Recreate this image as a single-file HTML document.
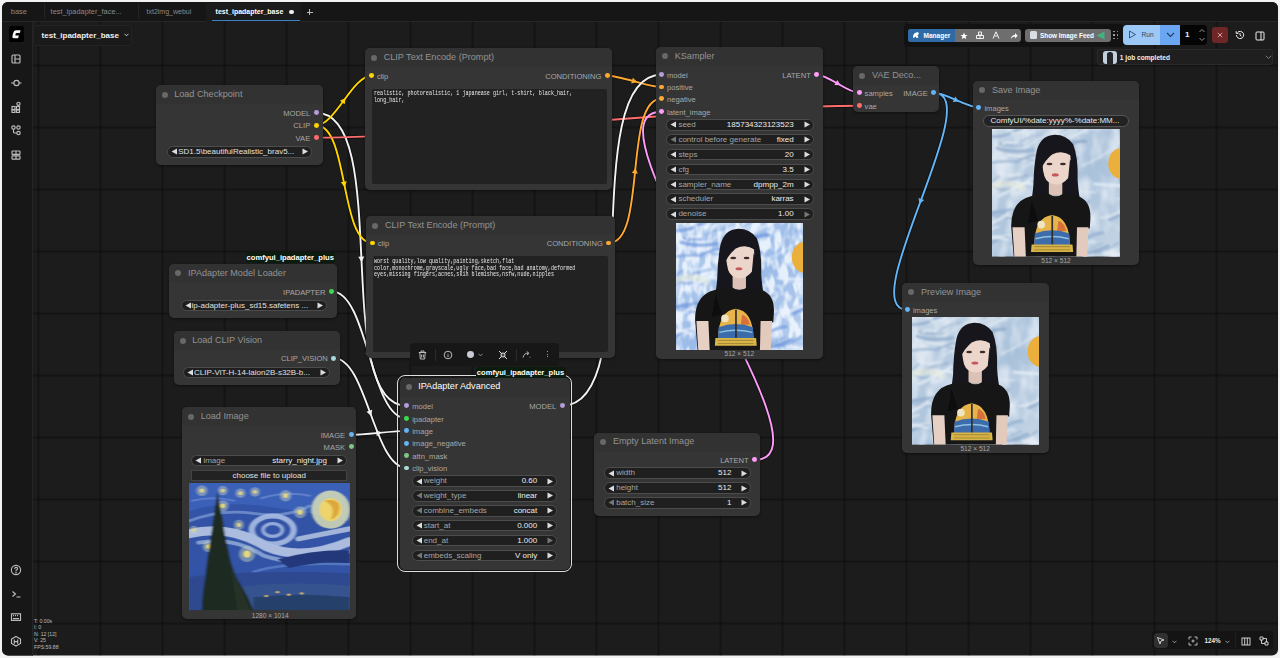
<!DOCTYPE html><html><head><meta charset="utf-8"><style>html,body{margin:0;padding:0;width:1280px;height:658px;overflow:hidden;background:#f3f3f3;font-family:"Liberation Sans",sans-serif;}*{box-sizing:content-box}</style></head><body>
<div id="win" style="position:absolute;left:0;top:0;width:1280px;height:658px;clip-path:inset(2px 2px 2.5px 2px round 6px);background:#1c1c1c;overflow:hidden">
<div style="position:absolute;left:30px;top:22px;width:1250px;height:636px;background-image:linear-gradient(to right, rgba(0,0,0,0.3) 2px, transparent 2px),linear-gradient(to bottom, rgba(0,0,0,0.3) 2px, transparent 2px);background-size:62px 62px;background-position:7.5px 42.5px;"></div>
<svg style="position:absolute;left:0;top:0" width="1280" height="658"><path d="M316.2,112.7 C392.9,112.7 330.0,405.8 406.7,405.8" stroke="rgba(0,0,0,0.5)" stroke-width="3.5" fill="none"/><path d="M316.2,125.3 C334.8,125.3 352.8,75.7 371.4,75.7" stroke="rgba(0,0,0,0.5)" stroke-width="3.5" fill="none"/><path d="M316.2,125.3 C348.8,125.3 339.7,243.0 372.3,243.0" stroke="rgba(0,0,0,0.5)" stroke-width="3.5" fill="none"/><path d="M316.2,137.6 C452.2,137.6 723.1,105.8 859.1,105.8" stroke="rgba(0,0,0,0.5)" stroke-width="3.5" fill="none"/><path d="M607.3,75.7 C621.1,75.7 647.7,87.0 661.5,87.0" stroke="rgba(0,0,0,0.5)" stroke-width="3.5" fill="none"/><path d="M608.8,243.0 C647.2,243.0 623.1,98.8 661.5,98.8" stroke="rgba(0,0,0,0.5)" stroke-width="3.5" fill="none"/><path d="M562.2,405.8 C648.6,405.8 575.1,74.7 661.5,74.7" stroke="rgba(0,0,0,0.5)" stroke-width="3.5" fill="none"/><path d="M754.7,459.8 C844.8,459.8 571.4,111.7 661.5,111.7" stroke="rgba(0,0,0,0.5)" stroke-width="3.5" fill="none"/><path d="M816.8,74.7 C828.3,74.7 847.6,92.8 859.1,92.8" stroke="rgba(0,0,0,0.5)" stroke-width="3.5" fill="none"/><path d="M933.7,92.8 C945.6,92.8 967.0,107.5 978.9,107.5" stroke="rgba(0,0,0,0.5)" stroke-width="3.5" fill="none"/><path d="M933.7,92.8 C988.3,92.8 852.8,309.8 907.4,309.8" stroke="rgba(0,0,0,0.5)" stroke-width="3.5" fill="none"/><path d="M331.5,291.4 C368.4,291.4 369.8,418.5 406.7,418.5" stroke="rgba(0,0,0,0.5)" stroke-width="3.5" fill="none"/><path d="M333.8,358.1 C366.8,358.1 373.7,468.0 406.7,468.0" stroke="rgba(0,0,0,0.5)" stroke-width="3.5" fill="none"/><path d="M351.1,434.9 C365.0,434.9 392.8,430.9 406.7,430.9" stroke="rgba(0,0,0,0.5)" stroke-width="3.5" fill="none"/><path d="M316.2,112.7 C392.9,112.7 330.0,405.8 406.7,405.8" stroke="#f2f2f2" stroke-width="1.9" fill="none"/><path d="M3,0 L-2.5,-3 L-2.5,3Z" fill="#f2f2f2" transform="translate(361.4,259.2) rotate(87.3)"/><path d="M316.2,125.3 C334.8,125.3 352.8,75.7 371.4,75.7" stroke="#FFD500" stroke-width="1.9" fill="none"/><path d="M3,0 L-2.5,-3 L-2.5,3Z" fill="#FFD500" transform="translate(343.8,100.5) rotate(-53.5)"/><path d="M316.2,125.3 C348.8,125.3 339.7,243.0 372.3,243.0" stroke="#FFD500" stroke-width="1.9" fill="none"/><path d="M3,0 L-2.5,-3 L-2.5,3Z" fill="#FFD500" transform="translate(344.2,184.2) rotate(78.7)"/><path d="M316.2,137.6 C452.2,137.6 723.1,105.8 859.1,105.8" stroke="#FF6E6E" stroke-width="1.9" fill="none"/><path d="M3,0 L-2.5,-3 L-2.5,3Z" fill="#FF6E6E" transform="translate(587.7,121.7) rotate(-4.5)"/><path d="M607.3,75.7 C621.1,75.7 647.7,87.0 661.5,87.0" stroke="#FFA931" stroke-width="1.9" fill="none"/><path d="M3,0 L-2.5,-3 L-2.5,3Z" fill="#FFA931" transform="translate(634.4,81.3) rotate(15.6)"/><path d="M608.8,243.0 C647.2,243.0 623.1,98.8 661.5,98.8" stroke="#FFA931" stroke-width="1.9" fill="none"/><path d="M3,0 L-2.5,-3 L-2.5,3Z" fill="#FFA931" transform="translate(635.1,170.9) rotate(-84.3)"/><path d="M562.2,405.8 C648.6,405.8 575.1,74.7 661.5,74.7" stroke="#f2f2f2" stroke-width="1.9" fill="none"/><path d="M3,0 L-2.5,-3 L-2.5,3Z" fill="#f2f2f2" transform="translate(611.9,240.3) rotate(-87.8)"/><path d="M754.7,459.8 C844.8,459.8 571.4,111.7 661.5,111.7" stroke="#FF9CF9" stroke-width="1.9" fill="none"/><path d="M3,0 L-2.5,-3 L-2.5,3Z" fill="#FF9CF9" transform="translate(708.1,285.8) rotate(-117.8)"/><path d="M816.8,74.7 C828.3,74.7 847.6,92.8 859.1,92.8" stroke="#FF9CF9" stroke-width="1.9" fill="none"/><path d="M3,0 L-2.5,-3 L-2.5,3Z" fill="#FF9CF9" transform="translate(838.0,83.8) rotate(30.4)"/><path d="M933.7,92.8 C945.6,92.8 967.0,107.5 978.9,107.5" stroke="#64B5F6" stroke-width="1.9" fill="none"/><path d="M3,0 L-2.5,-3 L-2.5,3Z" fill="#64B5F6" transform="translate(956.3,100.2) rotate(23.8)"/><path d="M933.7,92.8 C988.3,92.8 852.8,309.8 907.4,309.8" stroke="#64B5F6" stroke-width="1.9" fill="none"/><path d="M3,0 L-2.5,-3 L-2.5,3Z" fill="#64B5F6" transform="translate(920.5,201.3) rotate(110.5)"/><path d="M331.5,291.4 C368.4,291.4 369.8,418.5 406.7,418.5" stroke="#f2f2f2" stroke-width="1.9" fill="none"/><path d="M3,0 L-2.5,-3 L-2.5,3Z" fill="#f2f2f2" transform="translate(369.1,354.9) rotate(73.2)"/><path d="M333.8,358.1 C366.8,358.1 373.7,468.0 406.7,468.0" stroke="#f2f2f2" stroke-width="1.9" fill="none"/><path d="M3,0 L-2.5,-3 L-2.5,3Z" fill="#f2f2f2" transform="translate(370.2,413.1) rotate(70.0)"/><path d="M351.1,434.9 C365.0,434.9 392.8,430.9 406.7,430.9" stroke="#f2f2f2" stroke-width="1.9" fill="none"/><path d="M3,0 L-2.5,-3 L-2.5,3Z" fill="#f2f2f2" transform="translate(378.9,432.9) rotate(-5.5)"/></svg>
<div style="position:absolute;left:155.5px;top:85px;width:167px;height:79.5px;background:#353535;border-radius:5px;box-shadow:0 1px 3px rgba(0,0,0,0.45);"></div>
<div style="position:absolute;left:155.5px;top:85px;width:167px;height:19px;background:#323232;border-radius:5px 5px 0 0;"></div>
<div style="position:absolute;left:161.50px;top:91.50px;width:6.00px;height:6.00px;border-radius:50%;background:#686868;"></div>
<div style="position:absolute;left:174.2px;top:88.84px;line-height:10.92px;font-size:9.1px;color:#929292;font-weight:400;font-family:'Liberation Sans', sans-serif;white-space:pre;">Load Checkpoint</div>
<div style="position:absolute;left:313.75px;top:110.25px;width:4.90px;height:4.90px;border-radius:50%;background:#B39DDB;"></div>
<div style="position:absolute;right:969.8px;top:108.84px;line-height:9.12px;font-size:7.6px;color:#a8a8a8;font-weight:400;font-family:'Liberation Sans', sans-serif;white-space:pre;text-align:right;">MODEL</div>
<div style="position:absolute;left:313.75px;top:122.85px;width:4.90px;height:4.90px;border-radius:50%;background:#FFD500;"></div>
<div style="position:absolute;right:969.8px;top:121.44px;line-height:9.12px;font-size:7.6px;color:#a8a8a8;font-weight:400;font-family:'Liberation Sans', sans-serif;white-space:pre;text-align:right;">CLIP</div>
<div style="position:absolute;left:313.75px;top:135.15px;width:4.90px;height:4.90px;border-radius:50%;background:#FF6E6E;"></div>
<div style="position:absolute;right:969.8px;top:133.74px;line-height:9.12px;font-size:7.6px;color:#a8a8a8;font-weight:400;font-family:'Liberation Sans', sans-serif;white-space:pre;text-align:right;">VAE</div>
<div style="position:absolute;left:167.2px;top:146.00px;width:145.20px;height:11.60px;box-sizing:border-box;background:#1f1f1f;border:1px solid #4c4c4c;border-radius:5.8px;"></div>
<svg style="position:absolute;left:171.20px;top:148.30px;" width="7" height="7"><path d="M6 0.5 L0.5 3.5 L6 6.5Z" fill="#ddd"/></svg>
<svg style="position:absolute;left:302.40px;top:148.30px;" width="7" height="7"><path d="M0.5 0.5 L6 3.5 L0.5 6.5Z" fill="#ddd"/></svg>
<div style="position:absolute;left:178.2px;top:147.00px;line-height:9.60px;font-size:8.0px;color:#e0e0e0;font-weight:400;font-family:'Liberation Sans', sans-serif;white-space:pre;">SD1.5\beautifulRealistic_brav5...</div>
<div style="position:absolute;left:365px;top:48.3px;width:247px;height:142px;background:#353535;border-radius:5px;box-shadow:0 1px 3px rgba(0,0,0,0.45);"></div>
<div style="position:absolute;left:365px;top:48.3px;width:247px;height:19px;background:#323232;border-radius:5px 5px 0 0;"></div>
<div style="position:absolute;left:371.00px;top:54.80px;width:6.00px;height:6.00px;border-radius:50%;background:#686868;"></div>
<div style="position:absolute;left:383.7px;top:52.14px;line-height:10.92px;font-size:9.1px;color:#929292;font-weight:400;font-family:'Liberation Sans', sans-serif;white-space:pre;">CLIP Text Encode (Prompt)</div>
<div style="position:absolute;left:368.95px;top:73.25px;width:4.90px;height:4.90px;border-radius:50%;background:#FFD500;"></div>
<div style="position:absolute;left:376.9px;top:71.84px;line-height:9.12px;font-size:7.6px;color:#a8a8a8;font-weight:400;font-family:'Liberation Sans', sans-serif;white-space:pre;">clip</div>
<div style="position:absolute;left:604.85px;top:73.25px;width:4.90px;height:4.90px;border-radius:50%;background:#FFA931;"></div>
<div style="position:absolute;right:678.7px;top:71.84px;line-height:9.12px;font-size:7.6px;color:#a8a8a8;font-weight:400;font-family:'Liberation Sans', sans-serif;white-space:pre;text-align:right;">CONDITIONING</div>
<div style="position:absolute;left:372.2px;top:88.6px;width:234.6px;height:95px;background:#222;border-radius:2px;"></div>
<div style="position:absolute;left:374px;top:90.3px;width:320px;font-family:'Liberation Mono', monospace;font-size:7px;line-height:6.45px;color:#eaeaea;white-space:pre;transform:scaleX(0.726);transform-origin:0 0;">realistic, photorealistic, 1 japanease girl, t-shirt, black_hair,
long_hair,</div>
<div style="position:absolute;left:366.3px;top:216px;width:248.8px;height:142.3px;background:#353535;border-radius:5px;box-shadow:0 1px 3px rgba(0,0,0,0.45);"></div>
<div style="position:absolute;left:366.3px;top:216px;width:248.8px;height:19px;background:#323232;border-radius:5px 5px 0 0;"></div>
<div style="position:absolute;left:372.30px;top:222.50px;width:6.00px;height:6.00px;border-radius:50%;background:#686868;"></div>
<div style="position:absolute;left:385.0px;top:219.84px;line-height:10.92px;font-size:9.1px;color:#929292;font-weight:400;font-family:'Liberation Sans', sans-serif;white-space:pre;">CLIP Text Encode (Prompt)</div>
<div style="position:absolute;left:369.85px;top:240.55px;width:4.90px;height:4.90px;border-radius:50%;background:#FFD500;"></div>
<div style="position:absolute;left:377.8px;top:239.14px;line-height:9.12px;font-size:7.6px;color:#a8a8a8;font-weight:400;font-family:'Liberation Sans', sans-serif;white-space:pre;">clip</div>
<div style="position:absolute;left:606.35px;top:240.55px;width:4.90px;height:4.90px;border-radius:50%;background:#FFA931;"></div>
<div style="position:absolute;right:677.2px;top:239.14px;line-height:9.12px;font-size:7.6px;color:#a8a8a8;font-weight:400;font-family:'Liberation Sans', sans-serif;white-space:pre;text-align:right;">CONDITIONING</div>
<div style="position:absolute;left:372.6px;top:256.3px;width:235.5px;height:95.6px;background:#222;border-radius:2px;"></div>
<div style="position:absolute;left:374px;top:258.3px;width:320px;font-family:'Liberation Mono', monospace;font-size:7px;line-height:6.45px;color:#eaeaea;white-space:pre;transform:scaleX(0.726);transform-origin:0 0;">worst quality,low quality,painting,sketch,flat
color,monochrome,grayscale,ugly face,bad face,bad anatomy,deformed
eyes,missing fingers,acnes,skin blemishes,nsfw,nude,nipples</div>
<div style="position:absolute;left:656px;top:46.8px;width:166.8px;height:311.8px;background:#353535;border-radius:5px;box-shadow:0 1px 3px rgba(0,0,0,0.45);"></div>
<div style="position:absolute;left:656px;top:46.8px;width:166.8px;height:19px;background:#323232;border-radius:5px 5px 0 0;"></div>
<div style="position:absolute;left:662.00px;top:53.30px;width:6.00px;height:6.00px;border-radius:50%;background:#686868;"></div>
<div style="position:absolute;left:674.7px;top:50.64px;line-height:10.92px;font-size:9.1px;color:#929292;font-weight:400;font-family:'Liberation Sans', sans-serif;white-space:pre;">KSampler</div>
<div style="position:absolute;left:659.05px;top:72.25px;width:4.90px;height:4.90px;border-radius:50%;background:#B39DDB;"></div>
<div style="position:absolute;left:667.0px;top:70.84px;line-height:9.12px;font-size:7.6px;color:#a8a8a8;font-weight:400;font-family:'Liberation Sans', sans-serif;white-space:pre;">model</div>
<div style="position:absolute;left:659.05px;top:84.55px;width:4.90px;height:4.90px;border-radius:50%;background:#FFA931;"></div>
<div style="position:absolute;left:667.0px;top:83.14px;line-height:9.12px;font-size:7.6px;color:#a8a8a8;font-weight:400;font-family:'Liberation Sans', sans-serif;white-space:pre;">positive</div>
<div style="position:absolute;left:659.05px;top:96.35px;width:4.90px;height:4.90px;border-radius:50%;background:#FFA931;"></div>
<div style="position:absolute;left:667.0px;top:94.94px;line-height:9.12px;font-size:7.6px;color:#a8a8a8;font-weight:400;font-family:'Liberation Sans', sans-serif;white-space:pre;">negative</div>
<div style="position:absolute;left:659.05px;top:109.25px;width:4.90px;height:4.90px;border-radius:50%;background:#FF9CF9;"></div>
<div style="position:absolute;left:667.0px;top:107.84px;line-height:9.12px;font-size:7.6px;color:#a8a8a8;font-weight:400;font-family:'Liberation Sans', sans-serif;white-space:pre;">latent_image</div>
<div style="position:absolute;left:814.35px;top:72.25px;width:4.90px;height:4.90px;border-radius:50%;background:#FF9CF9;"></div>
<div style="position:absolute;right:469.20000000000005px;top:70.84px;line-height:9.12px;font-size:7.6px;color:#a8a8a8;font-weight:400;font-family:'Liberation Sans', sans-serif;white-space:pre;text-align:right;">LATENT</div>
<div style="position:absolute;left:666.4px;top:119.00px;width:147.20px;height:11.60px;box-sizing:border-box;background:#1f1f1f;border:1px solid #4c4c4c;border-radius:5.8px;"></div>
<svg style="position:absolute;left:670.40px;top:121.30px;" width="7" height="7"><path d="M6 0.5 L0.5 3.5 L6 6.5Z" fill="#ddd"/></svg>
<svg style="position:absolute;left:803.60px;top:121.30px;" width="7" height="7"><path d="M0.5 0.5 L6 3.5 L0.5 6.5Z" fill="#ddd"/></svg>
<div style="position:absolute;left:678.4px;top:120.00px;line-height:9.60px;font-size:8.0px;color:#a6a6a6;font-weight:400;font-family:'Liberation Sans', sans-serif;white-space:pre;">seed</div>
<div style="position:absolute;right:486.4px;top:120.00px;line-height:9.60px;font-size:8.0px;color:#ececec;font-weight:400;font-family:'Liberation Sans', sans-serif;white-space:pre;text-align:right;">185734323123523</div>
<div style="position:absolute;left:666.4px;top:133.88px;width:147.20px;height:11.60px;box-sizing:border-box;background:#1f1f1f;border:1px solid #4c4c4c;border-radius:5.8px;"></div>
<svg style="position:absolute;left:670.40px;top:136.18px;" width="7" height="7"><path d="M6 0.5 L0.5 3.5 L6 6.5Z" fill="#777"/></svg>
<svg style="position:absolute;left:803.60px;top:136.18px;" width="7" height="7"><path d="M0.5 0.5 L6 3.5 L0.5 6.5Z" fill="#ddd"/></svg>
<div style="position:absolute;left:678.4px;top:134.88px;line-height:9.60px;font-size:8.0px;color:#a6a6a6;font-weight:400;font-family:'Liberation Sans', sans-serif;white-space:pre;">control before generate</div>
<div style="position:absolute;right:486.4px;top:134.88px;line-height:9.60px;font-size:8.0px;color:#ececec;font-weight:400;font-family:'Liberation Sans', sans-serif;white-space:pre;text-align:right;">fixed</div>
<div style="position:absolute;left:666.4px;top:148.76px;width:147.20px;height:11.60px;box-sizing:border-box;background:#1f1f1f;border:1px solid #4c4c4c;border-radius:5.8px;"></div>
<svg style="position:absolute;left:670.40px;top:151.06px;" width="7" height="7"><path d="M6 0.5 L0.5 3.5 L6 6.5Z" fill="#ddd"/></svg>
<svg style="position:absolute;left:803.60px;top:151.06px;" width="7" height="7"><path d="M0.5 0.5 L6 3.5 L0.5 6.5Z" fill="#ddd"/></svg>
<div style="position:absolute;left:678.4px;top:149.76px;line-height:9.60px;font-size:8.0px;color:#a6a6a6;font-weight:400;font-family:'Liberation Sans', sans-serif;white-space:pre;">steps</div>
<div style="position:absolute;right:486.4px;top:149.76px;line-height:9.60px;font-size:8.0px;color:#ececec;font-weight:400;font-family:'Liberation Sans', sans-serif;white-space:pre;text-align:right;">20</div>
<div style="position:absolute;left:666.4px;top:163.64px;width:147.20px;height:11.60px;box-sizing:border-box;background:#1f1f1f;border:1px solid #4c4c4c;border-radius:5.8px;"></div>
<svg style="position:absolute;left:670.40px;top:165.94px;" width="7" height="7"><path d="M6 0.5 L0.5 3.5 L6 6.5Z" fill="#ddd"/></svg>
<svg style="position:absolute;left:803.60px;top:165.94px;" width="7" height="7"><path d="M0.5 0.5 L6 3.5 L0.5 6.5Z" fill="#ddd"/></svg>
<div style="position:absolute;left:678.4px;top:164.64px;line-height:9.60px;font-size:8.0px;color:#a6a6a6;font-weight:400;font-family:'Liberation Sans', sans-serif;white-space:pre;">cfg</div>
<div style="position:absolute;right:486.4px;top:164.64px;line-height:9.60px;font-size:8.0px;color:#ececec;font-weight:400;font-family:'Liberation Sans', sans-serif;white-space:pre;text-align:right;">3.5</div>
<div style="position:absolute;left:666.4px;top:178.52px;width:147.20px;height:11.60px;box-sizing:border-box;background:#1f1f1f;border:1px solid #4c4c4c;border-radius:5.8px;"></div>
<svg style="position:absolute;left:670.40px;top:180.82px;" width="7" height="7"><path d="M6 0.5 L0.5 3.5 L6 6.5Z" fill="#ddd"/></svg>
<svg style="position:absolute;left:803.60px;top:180.82px;" width="7" height="7"><path d="M0.5 0.5 L6 3.5 L0.5 6.5Z" fill="#ddd"/></svg>
<div style="position:absolute;left:678.4px;top:179.52px;line-height:9.60px;font-size:8.0px;color:#a6a6a6;font-weight:400;font-family:'Liberation Sans', sans-serif;white-space:pre;">sampler_name</div>
<div style="position:absolute;right:486.4px;top:179.52px;line-height:9.60px;font-size:8.0px;color:#ececec;font-weight:400;font-family:'Liberation Sans', sans-serif;white-space:pre;text-align:right;">dpmpp_2m</div>
<div style="position:absolute;left:666.4px;top:193.40px;width:147.20px;height:11.60px;box-sizing:border-box;background:#1f1f1f;border:1px solid #4c4c4c;border-radius:5.8px;"></div>
<svg style="position:absolute;left:670.40px;top:195.70px;" width="7" height="7"><path d="M6 0.5 L0.5 3.5 L6 6.5Z" fill="#ddd"/></svg>
<svg style="position:absolute;left:803.60px;top:195.70px;" width="7" height="7"><path d="M0.5 0.5 L6 3.5 L0.5 6.5Z" fill="#ddd"/></svg>
<div style="position:absolute;left:678.4px;top:194.40px;line-height:9.60px;font-size:8.0px;color:#a6a6a6;font-weight:400;font-family:'Liberation Sans', sans-serif;white-space:pre;">scheduler</div>
<div style="position:absolute;right:486.4px;top:194.40px;line-height:9.60px;font-size:8.0px;color:#ececec;font-weight:400;font-family:'Liberation Sans', sans-serif;white-space:pre;text-align:right;">karras</div>
<div style="position:absolute;left:666.4px;top:208.28px;width:147.20px;height:11.60px;box-sizing:border-box;background:#1f1f1f;border:1px solid #4c4c4c;border-radius:5.8px;"></div>
<svg style="position:absolute;left:670.40px;top:210.58px;" width="7" height="7"><path d="M6 0.5 L0.5 3.5 L6 6.5Z" fill="#ddd"/></svg>
<svg style="position:absolute;left:803.60px;top:210.58px;" width="7" height="7"><path d="M0.5 0.5 L6 3.5 L0.5 6.5Z" fill="#777"/></svg>
<div style="position:absolute;left:678.4px;top:209.28px;line-height:9.60px;font-size:8.0px;color:#a6a6a6;font-weight:400;font-family:'Liberation Sans', sans-serif;white-space:pre;">denoise</div>
<div style="position:absolute;right:486.4px;top:209.28px;line-height:9.60px;font-size:8.0px;color:#ececec;font-weight:400;font-family:'Liberation Sans', sans-serif;white-space:pre;text-align:right;">1.00</div>
<svg style="position:absolute;left:675.8px;top:222.7px" width="127.2" height="127.2" viewBox="0 0 100 100" preserveAspectRatio="none">
<defs><linearGradient id="gkbg" x1="0" y1="0" x2="1" y2="1"><stop offset="0" stop-color="#b9d0ee"/><stop offset="0.55" stop-color="#9bbbe8"/><stop offset="1" stop-color="#b9d0ee"/></linearGradient>
<filter id="gkbl" x="-20%" y="-20%" width="140%" height="140%"><feGaussianBlur stdDeviation="0.7"/></filter>
<filter id="gkbl2"><feGaussianBlur stdDeviation="0.4"/></filter></defs>
<rect width="100" height="100" fill="url(#gkbg)"/>
<filter id="gktu" x="0" y="0" width="100%" height="100%"><feTurbulence type="fractalNoise" baseFrequency="0.18 0.09" numOctaves="2" seed="3"/><feColorMatrix type="matrix" values="0 0 0 0 0.9  0 0 0 0 0.95  0 0 0 0 1  3.5 0 0 0 -1.3"/></filter>
<rect width="100" height="100" filter="url(#gktu)" opacity="0.85"/>
<g fill="none" stroke-linecap="round" filter="url(#gkbl)"><path d="M25.6 15.1 Q36.1 7.6 45.9 2.8" stroke="#eaf3ff" stroke-width="1.1" opacity="0.75"/><path d="M-5.9 43.4 Q-0.8 43.3 5.6 36.7" stroke="#6b95dc" stroke-width="1.2" opacity="0.64"/><path d="M59.0 94.8 Q73.6 87.1 80.5 88.5" stroke="#eaf3ff" stroke-width="2.2" opacity="0.67"/><path d="M5.9 11.8 Q12.1 13.1 23.4 12.7" stroke="#6b95dc" stroke-width="1.9" opacity="0.70"/><path d="M50.3 6.3 Q57.6 2.8 62.1 0.8" stroke="#eaf3ff" stroke-width="1.4" opacity="0.78"/><path d="M39.9 30.0 Q50.9 30.2 66.1 28.9" stroke="#6b95dc" stroke-width="1.7" opacity="0.90"/><path d="M70.2 28.8 Q82.6 24.2 96.2 14.4" stroke="#eaf3ff" stroke-width="1.2" opacity="0.75"/><path d="M-5.7 66.8 Q10.1 63.1 19.8 63.2" stroke="#6b95dc" stroke-width="2.0" opacity="0.79"/><path d="M53.8 45.6 Q67.0 49.4 80.6 49.8" stroke="#eaf3ff" stroke-width="1.1" opacity="0.83"/><path d="M61.2 99.3 Q72.7 96.1 86.1 89.6" stroke="#6b95dc" stroke-width="1.0" opacity="0.73"/><path d="M8.5 11.7 Q12.0 9.3 21.5 11.9" stroke="#eaf3ff" stroke-width="1.5" opacity="0.90"/><path d="M-1.1 44.9 Q12.3 49.7 20.6 47.3" stroke="#6b95dc" stroke-width="1.4" opacity="0.72"/><path d="M29.5 88.4 Q39.8 79.0 55.4 74.9" stroke="#eaf3ff" stroke-width="1.3" opacity="0.74"/><path d="M54.8 26.3 Q59.6 25.4 66.5 23.1" stroke="#6b95dc" stroke-width="2.3" opacity="0.83"/><path d="M46.7 61.8 Q60.2 58.2 67.2 49.0" stroke="#eaf3ff" stroke-width="2.2" opacity="0.87"/><path d="M33.2 39.9 Q36.6 34.9 47.0 38.6" stroke="#6b95dc" stroke-width="1.3" opacity="0.61"/><path d="M27.4 5.3 Q29.5 1.1 38.1 -0.3" stroke="#eaf3ff" stroke-width="1.0" opacity="0.90"/><path d="M57.5 14.9 Q64.3 8.5 73.2 9.6" stroke="#6b95dc" stroke-width="2.2" opacity="0.95"/><path d="M41.3 48.4 Q45.9 42.7 53.0 41.7" stroke="#eaf3ff" stroke-width="2.2" opacity="0.61"/><path d="M-7.5 95.1 Q2.4 85.4 11.6 85.1" stroke="#6b95dc" stroke-width="1.7" opacity="0.94"/><path d="M85.0 69.6 Q90.3 69.8 100.9 64.6" stroke="#eaf3ff" stroke-width="1.7" opacity="0.86"/><path d="M26.3 22.3 Q42.2 27.9 52.4 27.3" stroke="#6b95dc" stroke-width="2.1" opacity="0.85"/><path d="M14.9 51.8 Q18.9 44.5 30.4 41.7" stroke="#eaf3ff" stroke-width="1.4" opacity="0.83"/><path d="M95.2 44.7 Q113.0 46.1 123.6 50.2" stroke="#6b95dc" stroke-width="1.3" opacity="0.64"/><path d="M11.6 20.4 Q25.9 21.6 34.7 23.2" stroke="#eaf3ff" stroke-width="1.9" opacity="0.87"/><path d="M-0.7 66.1 Q15.5 66.2 27.7 66.8" stroke="#6b95dc" stroke-width="1.2" opacity="0.87"/><path d="M26.6 80.1 Q39.9 80.4 54.9 71.8" stroke="#eaf3ff" stroke-width="2.0" opacity="0.62"/><path d="M4.0 15.1 Q15.3 19.0 32.2 16.4" stroke="#6b95dc" stroke-width="2.4" opacity="0.81"/><path d="M28.5 54.9 Q38.3 52.4 40.5 46.9" stroke="#eaf3ff" stroke-width="1.7" opacity="0.92"/><path d="M37.7 87.2 Q47.9 79.5 62.1 75.9" stroke="#6b95dc" stroke-width="1.3" opacity="0.78"/><path d="M18.5 41.9 Q24.5 42.4 32.8 43.7" stroke="#eaf3ff" stroke-width="1.8" opacity="0.91"/><path d="M36.3 91.8 Q46.8 85.1 57.0 88.1" stroke="#6b95dc" stroke-width="1.6" opacity="0.62"/><path d="M-9.6 79.9 Q-0.4 78.8 5.2 76.6" stroke="#eaf3ff" stroke-width="1.5" opacity="0.76"/><path d="M51.1 78.4 Q56.0 75.1 64.8 76.3" stroke="#6b95dc" stroke-width="2.1" opacity="0.75"/><path d="M51.8 76.0 Q66.5 72.6 79.4 69.1" stroke="#eaf3ff" stroke-width="1.7" opacity="0.83"/><path d="M39.8 53.3 Q51.5 58.7 60.1 56.5" stroke="#6b95dc" stroke-width="2.3" opacity="0.65"/><path d="M51.5 94.3 Q60.5 87.4 75.5 81.6" stroke="#eaf3ff" stroke-width="1.1" opacity="0.65"/><path d="M-2.0 66.9 Q8.2 70.6 24.0 70.0" stroke="#6b95dc" stroke-width="1.9" opacity="0.61"/><path d="M87.1 96.8 Q94.2 97.9 102.9 99.3" stroke="#eaf3ff" stroke-width="2.4" opacity="0.88"/><path d="M7.8 43.2 Q15.4 37.9 27.9 36.3" stroke="#6b95dc" stroke-width="2.0" opacity="0.56"/><path d="M50.9 44.0 Q57.8 42.1 62.6 40.0" stroke="#eaf3ff" stroke-width="1.1" opacity="0.94"/><path d="M76.7 97.2 Q79.5 97.3 89.6 91.9" stroke="#6b95dc" stroke-width="1.4" opacity="0.60"/><path d="M36.4 91.1 Q46.0 90.2 61.1 80.9" stroke="#eaf3ff" stroke-width="1.8" opacity="0.83"/><path d="M-0.2 5.8 Q8.2 7.0 23.4 -0.5" stroke="#6b95dc" stroke-width="1.9" opacity="0.87"/><path d="M-0.8 85.6 Q5.4 84.6 12.4 86.8" stroke="#eaf3ff" stroke-width="1.8" opacity="0.92"/><path d="M19.5 12.9 Q26.2 5.3 39.2 4.4" stroke="#6b95dc" stroke-width="1.1" opacity="0.63"/><path d="M24.3 30.5 Q36.3 22.7 48.3 21.3" stroke="#eaf3ff" stroke-width="1.5" opacity="0.56"/><path d="M17.5 1.5 Q27.5 -0.7 42.4 -2.5" stroke="#6b95dc" stroke-width="2.3" opacity="0.59"/><path d="M80.1 43.2 Q89.7 44.0 100.9 44.6" stroke="#eaf3ff" stroke-width="2.0" opacity="0.94"/><path d="M27.7 83.2 Q39.2 80.6 52.3 81.0" stroke="#6b95dc" stroke-width="1.1" opacity="0.60"/><path d="M-2.2 74.1 Q1.9 73.7 12.6 66.6" stroke="#eaf3ff" stroke-width="2.2" opacity="0.82"/><path d="M21.0 24.2 Q26.7 21.7 37.8 20.2" stroke="#6b95dc" stroke-width="1.4" opacity="0.93"/><path d="M97.0 54.7 Q103.5 54.7 113.1 57.5" stroke="#eaf3ff" stroke-width="1.0" opacity="0.70"/><path d="M42.2 50.3 Q45.9 46.4 57.5 47.2" stroke="#6b95dc" stroke-width="1.1" opacity="0.71"/><path d="M-5.4 2.2 Q3.3 -1.0 10.6 -4.8" stroke="#eaf3ff" stroke-width="2.1" opacity="0.81"/><path d="M68.8 87.9 Q81.6 81.2 86.7 81.6" stroke="#6b95dc" stroke-width="2.0" opacity="0.81"/><path d="M-5.2 83.5 Q10.6 85.3 22.7 80.8" stroke="#eaf3ff" stroke-width="1.2" opacity="0.76"/><path d="M45.5 83.5 Q59.4 88.2 71.9 85.1" stroke="#6b95dc" stroke-width="2.0" opacity="0.83"/><path d="M15.3 3.1 Q19.0 4.3 29.0 -1.3" stroke="#eaf3ff" stroke-width="1.8" opacity="0.80"/><path d="M58.9 68.1 Q69.9 64.7 76.1 56.4" stroke="#6b95dc" stroke-width="1.7" opacity="0.76"/><path d="M62.5 6.6 Q70.8 -0.6 85.8 -3.2" stroke="#eaf3ff" stroke-width="2.0" opacity="0.63"/><path d="M71.4 97.6 Q81.2 96.4 91.4 91.5" stroke="#6b95dc" stroke-width="2.1" opacity="0.80"/><path d="M60.7 7.7 Q69.4 3.0 74.2 2.1" stroke="#eaf3ff" stroke-width="1.8" opacity="0.55"/><path d="M-3.3 26.9 Q10.1 24.2 20.7 25.8" stroke="#6b95dc" stroke-width="1.7" opacity="0.74"/><path d="M41.3 11.9 Q57.8 10.2 66.7 -0.1" stroke="#eaf3ff" stroke-width="1.0" opacity="0.73"/><path d="M80.2 96.8 Q87.2 97.5 98.8 89.3" stroke="#6b95dc" stroke-width="1.3" opacity="0.78"/><path d="M5.6 52.4 Q21.0 45.6 31.3 38.6" stroke="#eaf3ff" stroke-width="2.2" opacity="0.83"/><path d="M15.5 89.8 Q20.2 84.0 32.8 78.4" stroke="#6b95dc" stroke-width="1.6" opacity="0.67"/><path d="M5.5 34.4 Q10.3 37.5 23.1 35.7" stroke="#eaf3ff" stroke-width="2.2" opacity="0.60"/><path d="M91.9 71.3 Q104.1 65.2 118.2 61.1" stroke="#6b95dc" stroke-width="2.4" opacity="0.79"/>
<path d="M0 45 Q12 40 24 46" stroke="#e9eddc" stroke-width="5" opacity="0.6"/>
</g>
<ellipse cx="101" cy="27" rx="10" ry="12" fill="#eab03a" filter="url(#gkbl2)"/>
<g filter="url(#gkbl2)">
<path d="M49 4.5 Q38 5 35 17 Q32.5 30 32.5 44 Q31 56 29.5 68 L40 68 L40 52 L60 52 L61 66 L70.5 64 Q67.5 50 67 40 Q67.5 22 63.5 12 Q58.5 4.5 49 4.5Z" fill="#18181d"/>
<rect x="44.5" y="38" width="10.5" height="14" fill="#dcc2b6"/>
<path d="M39 19 Q50 12 61 17 Q62.5 30 60 38 Q55 44 50 43.5 Q43 43 41 37 Q38.5 28 39 19Z" fill="#ecd6cc"/>
<path d="M37 15 Q50 7 63 14 L62 21 Q55 16 47 20 Q42 24 38.5 31Z" fill="#18181d"/>
<path d="M33 36 Q36 30 39 24 L40.5 42 Q37 52 32 58Z" fill="#18181d"/>
<path d="M61 24 L65.5 30 L65 58 Q60 50 59.5 40Z" fill="#18181d"/>
<ellipse cx="45" cy="27.5" rx="2.3" ry="1" fill="#3e2c2c"/>
<ellipse cx="55.5" cy="27.5" rx="2.3" ry="1" fill="#3e2c2c"/>
<ellipse cx="49.5" cy="36" rx="2.7" ry="1.2" fill="#c4585a"/>
<path d="M17 100 L15 76 Q15 56 31 52.5 L44 50.5 Q50 55 56 50.5 L67 52.5 Q77.5 56 77 70 L76.5 78 L72 78 L71 100Z" fill="#141417"/>
<path d="M31 56 Q30 66 28 74 L36 72Z" fill="#0c0c0e" opacity="0.7"/>
<path d="M16 77 L25.5 77 L26.5 100 L17.5 100Z" fill="#e6cfc3"/>
<path d="M66.5 77 L75.5 77 L74.5 100 L66 100Z" fill="#e2cabd"/>
<path d="M33 91 Q33.5 69 47 67.5 Q60.5 69 61 91 Z" fill="#e6b44a"/>
<circle cx="38.5" cy="75" r="3" fill="#f2e4c0"/>
<path d="M52 72 Q57 74 58 80 L51 80Z" fill="#d8703a"/>
<path d="M33.5 82 Q47 77 60.5 82 L61 91 L33 91Z" fill="#3c6cac"/>
<path d="M34 86 Q47 82.5 60 86" stroke="#8fc0e0" stroke-width="1.2" fill="none"/>
<rect x="46.5" y="68" width="1.3" height="23" fill="#2e2e2e"/>
<path d="M31 90.5 H63 L63.5 96.5 H30.5Z" fill="#d9b447"/>
<path d="M33 92.3 H61 M33 94.8 H61" stroke="#5a4a20" stroke-width="0.6" opacity="0.55"/>
</g>
</svg>
<div style="position:absolute;left:539.3px;width:400px;top:350.24px;line-height:7.92px;font-size:6.6px;color:#a8a8a8;font-weight:400;font-family:'Liberation Sans', sans-serif;white-space:pre;text-align:center;">512 × 512</div>
<div style="position:absolute;left:853.4px;top:66px;width:86px;height:46px;background:#353535;border-radius:5px;box-shadow:0 1px 3px rgba(0,0,0,0.45);"></div>
<div style="position:absolute;left:853.4px;top:66px;width:86px;height:19px;background:#323232;border-radius:5px 5px 0 0;"></div>
<div style="position:absolute;left:859.40px;top:72.50px;width:6.00px;height:6.00px;border-radius:50%;background:#686868;"></div>
<div style="position:absolute;left:872.1px;top:69.84px;line-height:10.92px;font-size:9.1px;color:#929292;font-weight:400;font-family:'Liberation Sans', sans-serif;white-space:pre;">VAE Deco...</div>
<div style="position:absolute;left:856.65px;top:90.35px;width:4.90px;height:4.90px;border-radius:50%;background:#FF9CF9;"></div>
<div style="position:absolute;left:864.6px;top:88.94px;line-height:9.12px;font-size:7.6px;color:#a8a8a8;font-weight:400;font-family:'Liberation Sans', sans-serif;white-space:pre;">samples</div>
<div style="position:absolute;left:856.65px;top:103.35px;width:4.90px;height:4.90px;border-radius:50%;background:#FF6E6E;"></div>
<div style="position:absolute;left:864.6px;top:101.94px;line-height:9.12px;font-size:7.6px;color:#a8a8a8;font-weight:400;font-family:'Liberation Sans', sans-serif;white-space:pre;">vae</div>
<div style="position:absolute;left:931.25px;top:90.35px;width:4.90px;height:4.90px;border-radius:50%;background:#64B5F6;"></div>
<div style="position:absolute;right:352.29999999999995px;top:88.94px;line-height:9.12px;font-size:7.6px;color:#a8a8a8;font-weight:400;font-family:'Liberation Sans', sans-serif;white-space:pre;text-align:right;">IMAGE</div>
<div style="position:absolute;left:973.2px;top:80.8px;width:166.2px;height:184.2px;background:#353535;border-radius:5px;box-shadow:0 1px 3px rgba(0,0,0,0.45);"></div>
<div style="position:absolute;left:973.2px;top:80.8px;width:166.2px;height:19px;background:#323232;border-radius:5px 5px 0 0;"></div>
<div style="position:absolute;left:979.20px;top:87.30px;width:6.00px;height:6.00px;border-radius:50%;background:#686868;"></div>
<div style="position:absolute;left:991.9000000000001px;top:84.64px;line-height:10.92px;font-size:9.1px;color:#929292;font-weight:400;font-family:'Liberation Sans', sans-serif;white-space:pre;">Save Image</div>
<div style="position:absolute;left:976.45px;top:105.05px;width:4.90px;height:4.90px;border-radius:50%;background:#64B5F6;"></div>
<div style="position:absolute;left:984.4px;top:103.64px;line-height:9.12px;font-size:7.6px;color:#a8a8a8;font-weight:400;font-family:'Liberation Sans', sans-serif;white-space:pre;">images</div>
<div style="position:absolute;left:982.9px;top:115.2px;width:146.5px;height:11.7px;background:#222;border:1px solid #555;border-radius:6px;box-sizing:border-box;"></div>
<div style="position:absolute;left:990.5px;top:116.20px;line-height:9.60px;font-size:8.0px;color:#e8e8e8;font-weight:400;font-family:'Liberation Sans', sans-serif;white-space:pre;">ComfyUI/%date:yyyy%-%date:MM...</div>
<svg style="position:absolute;left:992.2px;top:129.2px" width="127.8" height="127.5" viewBox="0 0 100 100" preserveAspectRatio="none">
<defs><linearGradient id="gsbg" x1="0" y1="0" x2="1" y2="1"><stop offset="0" stop-color="#c6d6e6"/><stop offset="0.55" stop-color="#a9c1da"/><stop offset="1" stop-color="#c6d6e6"/></linearGradient>
<filter id="gsbl" x="-20%" y="-20%" width="140%" height="140%"><feGaussianBlur stdDeviation="0.7"/></filter>
<filter id="gsbl2"><feGaussianBlur stdDeviation="0.4"/></filter></defs>
<rect width="100" height="100" fill="url(#gsbg)"/>
<filter id="gstu" x="0" y="0" width="100%" height="100%"><feTurbulence type="fractalNoise" baseFrequency="0.09 0.05" numOctaves="2" seed="3"/><feColorMatrix type="matrix" values="0 0 0 0 0.95  0 0 0 0 0.97  0 0 0 0 1  3.0 0 0 0 -1.2"/></filter>
<rect width="100" height="100" filter="url(#gstu)" opacity="0.55"/>
<g fill="none" stroke-linecap="round" filter="url(#gsbl)"><path d="M25.6 15.1 Q36.1 7.6 45.9 2.8" stroke="#e6eef5" stroke-width="1.1" opacity="0.75"/><path d="M-5.9 43.4 Q-0.8 43.3 5.6 36.7" stroke="#8eaacb" stroke-width="1.2" opacity="0.64"/><path d="M59.0 94.8 Q73.6 87.1 80.5 88.5" stroke="#e6eef5" stroke-width="2.2" opacity="0.67"/><path d="M5.9 11.8 Q12.1 13.1 23.4 12.7" stroke="#8eaacb" stroke-width="1.9" opacity="0.70"/><path d="M50.3 6.3 Q57.6 2.8 62.1 0.8" stroke="#e6eef5" stroke-width="1.4" opacity="0.78"/><path d="M39.9 30.0 Q50.9 30.2 66.1 28.9" stroke="#8eaacb" stroke-width="1.7" opacity="0.90"/><path d="M70.2 28.8 Q82.6 24.2 96.2 14.4" stroke="#e6eef5" stroke-width="1.2" opacity="0.75"/><path d="M-5.7 66.8 Q10.1 63.1 19.8 63.2" stroke="#8eaacb" stroke-width="2.0" opacity="0.79"/><path d="M53.8 45.6 Q67.0 49.4 80.6 49.8" stroke="#e6eef5" stroke-width="1.1" opacity="0.83"/><path d="M61.2 99.3 Q72.7 96.1 86.1 89.6" stroke="#8eaacb" stroke-width="1.0" opacity="0.73"/><path d="M8.5 11.7 Q12.0 9.3 21.5 11.9" stroke="#e6eef5" stroke-width="1.5" opacity="0.90"/><path d="M-1.1 44.9 Q12.3 49.7 20.6 47.3" stroke="#8eaacb" stroke-width="1.4" opacity="0.72"/><path d="M29.5 88.4 Q39.8 79.0 55.4 74.9" stroke="#e6eef5" stroke-width="1.3" opacity="0.74"/><path d="M54.8 26.3 Q59.6 25.4 66.5 23.1" stroke="#8eaacb" stroke-width="2.3" opacity="0.83"/><path d="M46.7 61.8 Q60.2 58.2 67.2 49.0" stroke="#e6eef5" stroke-width="2.2" opacity="0.87"/><path d="M33.2 39.9 Q36.6 34.9 47.0 38.6" stroke="#8eaacb" stroke-width="1.3" opacity="0.61"/><path d="M27.4 5.3 Q29.5 1.1 38.1 -0.3" stroke="#e6eef5" stroke-width="1.0" opacity="0.90"/><path d="M57.5 14.9 Q64.3 8.5 73.2 9.6" stroke="#8eaacb" stroke-width="2.2" opacity="0.95"/><path d="M41.3 48.4 Q45.9 42.7 53.0 41.7" stroke="#e6eef5" stroke-width="2.2" opacity="0.61"/><path d="M-7.5 95.1 Q2.4 85.4 11.6 85.1" stroke="#8eaacb" stroke-width="1.7" opacity="0.94"/><path d="M85.0 69.6 Q90.3 69.8 100.9 64.6" stroke="#e6eef5" stroke-width="1.7" opacity="0.86"/><path d="M26.3 22.3 Q42.2 27.9 52.4 27.3" stroke="#8eaacb" stroke-width="2.1" opacity="0.85"/><path d="M14.9 51.8 Q18.9 44.5 30.4 41.7" stroke="#e6eef5" stroke-width="1.4" opacity="0.83"/><path d="M95.2 44.7 Q113.0 46.1 123.6 50.2" stroke="#8eaacb" stroke-width="1.3" opacity="0.64"/><path d="M11.6 20.4 Q25.9 21.6 34.7 23.2" stroke="#e6eef5" stroke-width="1.9" opacity="0.87"/><path d="M-0.7 66.1 Q15.5 66.2 27.7 66.8" stroke="#8eaacb" stroke-width="1.2" opacity="0.87"/><path d="M26.6 80.1 Q39.9 80.4 54.9 71.8" stroke="#e6eef5" stroke-width="2.0" opacity="0.62"/><path d="M4.0 15.1 Q15.3 19.0 32.2 16.4" stroke="#8eaacb" stroke-width="2.4" opacity="0.81"/><path d="M28.5 54.9 Q38.3 52.4 40.5 46.9" stroke="#e6eef5" stroke-width="1.7" opacity="0.92"/><path d="M37.7 87.2 Q47.9 79.5 62.1 75.9" stroke="#8eaacb" stroke-width="1.3" opacity="0.78"/><path d="M18.5 41.9 Q24.5 42.4 32.8 43.7" stroke="#e6eef5" stroke-width="1.8" opacity="0.91"/><path d="M36.3 91.8 Q46.8 85.1 57.0 88.1" stroke="#8eaacb" stroke-width="1.6" opacity="0.62"/><path d="M-9.6 79.9 Q-0.4 78.8 5.2 76.6" stroke="#e6eef5" stroke-width="1.5" opacity="0.76"/><path d="M51.1 78.4 Q56.0 75.1 64.8 76.3" stroke="#8eaacb" stroke-width="2.1" opacity="0.75"/><path d="M51.8 76.0 Q66.5 72.6 79.4 69.1" stroke="#e6eef5" stroke-width="1.7" opacity="0.83"/><path d="M39.8 53.3 Q51.5 58.7 60.1 56.5" stroke="#8eaacb" stroke-width="2.3" opacity="0.65"/><path d="M51.5 94.3 Q60.5 87.4 75.5 81.6" stroke="#e6eef5" stroke-width="1.1" opacity="0.65"/><path d="M-2.0 66.9 Q8.2 70.6 24.0 70.0" stroke="#8eaacb" stroke-width="1.9" opacity="0.61"/><path d="M87.1 96.8 Q94.2 97.9 102.9 99.3" stroke="#e6eef5" stroke-width="2.4" opacity="0.88"/><path d="M7.8 43.2 Q15.4 37.9 27.9 36.3" stroke="#8eaacb" stroke-width="2.0" opacity="0.56"/><path d="M50.9 44.0 Q57.8 42.1 62.6 40.0" stroke="#e6eef5" stroke-width="1.1" opacity="0.94"/><path d="M76.7 97.2 Q79.5 97.3 89.6 91.9" stroke="#8eaacb" stroke-width="1.4" opacity="0.60"/><path d="M36.4 91.1 Q46.0 90.2 61.1 80.9" stroke="#e6eef5" stroke-width="1.8" opacity="0.83"/><path d="M-0.2 5.8 Q8.2 7.0 23.4 -0.5" stroke="#8eaacb" stroke-width="1.9" opacity="0.87"/><path d="M-0.8 85.6 Q5.4 84.6 12.4 86.8" stroke="#e6eef5" stroke-width="1.8" opacity="0.92"/><path d="M19.5 12.9 Q26.2 5.3 39.2 4.4" stroke="#8eaacb" stroke-width="1.1" opacity="0.63"/><path d="M24.3 30.5 Q36.3 22.7 48.3 21.3" stroke="#e6eef5" stroke-width="1.5" opacity="0.56"/><path d="M17.5 1.5 Q27.5 -0.7 42.4 -2.5" stroke="#8eaacb" stroke-width="2.3" opacity="0.59"/><path d="M80.1 43.2 Q89.7 44.0 100.9 44.6" stroke="#e6eef5" stroke-width="2.0" opacity="0.94"/><path d="M27.7 83.2 Q39.2 80.6 52.3 81.0" stroke="#8eaacb" stroke-width="1.1" opacity="0.60"/><path d="M-2.2 74.1 Q1.9 73.7 12.6 66.6" stroke="#e6eef5" stroke-width="2.2" opacity="0.82"/><path d="M21.0 24.2 Q26.7 21.7 37.8 20.2" stroke="#8eaacb" stroke-width="1.4" opacity="0.93"/><path d="M97.0 54.7 Q103.5 54.7 113.1 57.5" stroke="#e6eef5" stroke-width="1.0" opacity="0.70"/><path d="M42.2 50.3 Q45.9 46.4 57.5 47.2" stroke="#8eaacb" stroke-width="1.1" opacity="0.71"/><path d="M-5.4 2.2 Q3.3 -1.0 10.6 -4.8" stroke="#e6eef5" stroke-width="2.1" opacity="0.81"/><path d="M68.8 87.9 Q81.6 81.2 86.7 81.6" stroke="#8eaacb" stroke-width="2.0" opacity="0.81"/><path d="M-5.2 83.5 Q10.6 85.3 22.7 80.8" stroke="#e6eef5" stroke-width="1.2" opacity="0.76"/><path d="M45.5 83.5 Q59.4 88.2 71.9 85.1" stroke="#8eaacb" stroke-width="2.0" opacity="0.83"/><path d="M15.3 3.1 Q19.0 4.3 29.0 -1.3" stroke="#e6eef5" stroke-width="1.8" opacity="0.80"/><path d="M58.9 68.1 Q69.9 64.7 76.1 56.4" stroke="#8eaacb" stroke-width="1.7" opacity="0.76"/><path d="M62.5 6.6 Q70.8 -0.6 85.8 -3.2" stroke="#e6eef5" stroke-width="2.0" opacity="0.63"/><path d="M71.4 97.6 Q81.2 96.4 91.4 91.5" stroke="#8eaacb" stroke-width="2.1" opacity="0.80"/><path d="M60.7 7.7 Q69.4 3.0 74.2 2.1" stroke="#e6eef5" stroke-width="1.8" opacity="0.55"/><path d="M-3.3 26.9 Q10.1 24.2 20.7 25.8" stroke="#8eaacb" stroke-width="1.7" opacity="0.74"/><path d="M41.3 11.9 Q57.8 10.2 66.7 -0.1" stroke="#e6eef5" stroke-width="1.0" opacity="0.73"/><path d="M80.2 96.8 Q87.2 97.5 98.8 89.3" stroke="#8eaacb" stroke-width="1.3" opacity="0.78"/><path d="M5.6 52.4 Q21.0 45.6 31.3 38.6" stroke="#e6eef5" stroke-width="2.2" opacity="0.83"/><path d="M15.5 89.8 Q20.2 84.0 32.8 78.4" stroke="#8eaacb" stroke-width="1.6" opacity="0.67"/><path d="M5.5 34.4 Q10.3 37.5 23.1 35.7" stroke="#e6eef5" stroke-width="2.2" opacity="0.60"/><path d="M91.9 71.3 Q104.1 65.2 118.2 61.1" stroke="#8eaacb" stroke-width="2.4" opacity="0.79"/>
<path d="M0 45 Q12 40 24 46" stroke="#e9eddc" stroke-width="5" opacity="0.6"/>
</g>
<ellipse cx="101" cy="27" rx="10" ry="12" fill="#eab03a" filter="url(#gsbl2)"/>
<g filter="url(#gsbl2)">
<path d="M49 4.5 Q38 5 35 17 Q32.5 30 32.5 44 Q31 56 29.5 68 L40 68 L40 52 L60 52 L61 66 L70.5 64 Q67.5 50 67 40 Q67.5 22 63.5 12 Q58.5 4.5 49 4.5Z" fill="#18181d"/>
<rect x="44.5" y="38" width="10.5" height="14" fill="#dcc2b6"/>
<path d="M39 19 Q50 12 61 17 Q62.5 30 60 38 Q55 44 50 43.5 Q43 43 41 37 Q38.5 28 39 19Z" fill="#ecd6cc"/>
<path d="M37 15 Q50 7 63 14 L62 21 Q55 16 47 20 Q42 24 38.5 31Z" fill="#18181d"/>
<path d="M33 36 Q36 30 39 24 L40.5 42 Q37 52 32 58Z" fill="#18181d"/>
<path d="M61 24 L65.5 30 L65 58 Q60 50 59.5 40Z" fill="#18181d"/>
<ellipse cx="45" cy="27.5" rx="2.3" ry="1" fill="#3e2c2c"/>
<ellipse cx="55.5" cy="27.5" rx="2.3" ry="1" fill="#3e2c2c"/>
<ellipse cx="49.5" cy="36" rx="2.7" ry="1.2" fill="#c4585a"/>
<path d="M17 100 L15 76 Q15 56 31 52.5 L44 50.5 Q50 55 56 50.5 L67 52.5 Q77.5 56 77 70 L76.5 78 L72 78 L71 100Z" fill="#141417"/>
<path d="M31 56 Q30 66 28 74 L36 72Z" fill="#0c0c0e" opacity="0.7"/>
<path d="M16 77 L25.5 77 L26.5 100 L17.5 100Z" fill="#e6cfc3"/>
<path d="M66.5 77 L75.5 77 L74.5 100 L66 100Z" fill="#e2cabd"/>
<path d="M33 91 Q33.5 69 47 67.5 Q60.5 69 61 91 Z" fill="#e6b44a"/>
<circle cx="38.5" cy="75" r="3" fill="#f2e4c0"/>
<path d="M52 72 Q57 74 58 80 L51 80Z" fill="#d8703a"/>
<path d="M33.5 82 Q47 77 60.5 82 L61 91 L33 91Z" fill="#3c6cac"/>
<path d="M34 86 Q47 82.5 60 86" stroke="#8fc0e0" stroke-width="1.2" fill="none"/>
<rect x="46.5" y="68" width="1.3" height="23" fill="#2e2e2e"/>
<path d="M31 90.5 H63 L63.5 96.5 H30.5Z" fill="#d9b447"/>
<path d="M33 92.3 H61 M33 94.8 H61" stroke="#5a4a20" stroke-width="0.6" opacity="0.55"/>
</g>
</svg>
<div style="position:absolute;left:856px;width:400px;top:256.54px;line-height:7.92px;font-size:6.6px;color:#a8a8a8;font-weight:400;font-family:'Liberation Sans', sans-serif;white-space:pre;text-align:center;">512 × 512</div>
<div style="position:absolute;left:902.3px;top:282.7px;width:146.6px;height:170.5px;background:#353535;border-radius:5px;box-shadow:0 1px 3px rgba(0,0,0,0.45);"></div>
<div style="position:absolute;left:902.3px;top:282.7px;width:146.6px;height:19px;background:#323232;border-radius:5px 5px 0 0;"></div>
<div style="position:absolute;left:908.30px;top:289.20px;width:6.00px;height:6.00px;border-radius:50%;background:#686868;"></div>
<div style="position:absolute;left:921.0px;top:286.54px;line-height:10.92px;font-size:9.1px;color:#929292;font-weight:400;font-family:'Liberation Sans', sans-serif;white-space:pre;">Preview Image</div>
<div style="position:absolute;left:904.95px;top:307.35px;width:4.90px;height:4.90px;border-radius:50%;background:#64B5F6;"></div>
<div style="position:absolute;left:912.9px;top:305.94px;line-height:9.12px;font-size:7.6px;color:#a8a8a8;font-weight:400;font-family:'Liberation Sans', sans-serif;white-space:pre;">images</div>
<svg style="position:absolute;left:911.7px;top:317px" width="127" height="127.6" viewBox="0 0 100 100" preserveAspectRatio="none">
<defs><linearGradient id="gpbg" x1="0" y1="0" x2="1" y2="1"><stop offset="0" stop-color="#c6d6e6"/><stop offset="0.55" stop-color="#a9c1da"/><stop offset="1" stop-color="#c6d6e6"/></linearGradient>
<filter id="gpbl" x="-20%" y="-20%" width="140%" height="140%"><feGaussianBlur stdDeviation="0.7"/></filter>
<filter id="gpbl2"><feGaussianBlur stdDeviation="0.4"/></filter></defs>
<rect width="100" height="100" fill="url(#gpbg)"/>
<filter id="gptu" x="0" y="0" width="100%" height="100%"><feTurbulence type="fractalNoise" baseFrequency="0.09 0.05" numOctaves="2" seed="3"/><feColorMatrix type="matrix" values="0 0 0 0 0.95  0 0 0 0 0.97  0 0 0 0 1  3.0 0 0 0 -1.2"/></filter>
<rect width="100" height="100" filter="url(#gptu)" opacity="0.55"/>
<g fill="none" stroke-linecap="round" filter="url(#gpbl)"><path d="M25.6 15.1 Q36.1 7.6 45.9 2.8" stroke="#e6eef5" stroke-width="1.1" opacity="0.75"/><path d="M-5.9 43.4 Q-0.8 43.3 5.6 36.7" stroke="#8eaacb" stroke-width="1.2" opacity="0.64"/><path d="M59.0 94.8 Q73.6 87.1 80.5 88.5" stroke="#e6eef5" stroke-width="2.2" opacity="0.67"/><path d="M5.9 11.8 Q12.1 13.1 23.4 12.7" stroke="#8eaacb" stroke-width="1.9" opacity="0.70"/><path d="M50.3 6.3 Q57.6 2.8 62.1 0.8" stroke="#e6eef5" stroke-width="1.4" opacity="0.78"/><path d="M39.9 30.0 Q50.9 30.2 66.1 28.9" stroke="#8eaacb" stroke-width="1.7" opacity="0.90"/><path d="M70.2 28.8 Q82.6 24.2 96.2 14.4" stroke="#e6eef5" stroke-width="1.2" opacity="0.75"/><path d="M-5.7 66.8 Q10.1 63.1 19.8 63.2" stroke="#8eaacb" stroke-width="2.0" opacity="0.79"/><path d="M53.8 45.6 Q67.0 49.4 80.6 49.8" stroke="#e6eef5" stroke-width="1.1" opacity="0.83"/><path d="M61.2 99.3 Q72.7 96.1 86.1 89.6" stroke="#8eaacb" stroke-width="1.0" opacity="0.73"/><path d="M8.5 11.7 Q12.0 9.3 21.5 11.9" stroke="#e6eef5" stroke-width="1.5" opacity="0.90"/><path d="M-1.1 44.9 Q12.3 49.7 20.6 47.3" stroke="#8eaacb" stroke-width="1.4" opacity="0.72"/><path d="M29.5 88.4 Q39.8 79.0 55.4 74.9" stroke="#e6eef5" stroke-width="1.3" opacity="0.74"/><path d="M54.8 26.3 Q59.6 25.4 66.5 23.1" stroke="#8eaacb" stroke-width="2.3" opacity="0.83"/><path d="M46.7 61.8 Q60.2 58.2 67.2 49.0" stroke="#e6eef5" stroke-width="2.2" opacity="0.87"/><path d="M33.2 39.9 Q36.6 34.9 47.0 38.6" stroke="#8eaacb" stroke-width="1.3" opacity="0.61"/><path d="M27.4 5.3 Q29.5 1.1 38.1 -0.3" stroke="#e6eef5" stroke-width="1.0" opacity="0.90"/><path d="M57.5 14.9 Q64.3 8.5 73.2 9.6" stroke="#8eaacb" stroke-width="2.2" opacity="0.95"/><path d="M41.3 48.4 Q45.9 42.7 53.0 41.7" stroke="#e6eef5" stroke-width="2.2" opacity="0.61"/><path d="M-7.5 95.1 Q2.4 85.4 11.6 85.1" stroke="#8eaacb" stroke-width="1.7" opacity="0.94"/><path d="M85.0 69.6 Q90.3 69.8 100.9 64.6" stroke="#e6eef5" stroke-width="1.7" opacity="0.86"/><path d="M26.3 22.3 Q42.2 27.9 52.4 27.3" stroke="#8eaacb" stroke-width="2.1" opacity="0.85"/><path d="M14.9 51.8 Q18.9 44.5 30.4 41.7" stroke="#e6eef5" stroke-width="1.4" opacity="0.83"/><path d="M95.2 44.7 Q113.0 46.1 123.6 50.2" stroke="#8eaacb" stroke-width="1.3" opacity="0.64"/><path d="M11.6 20.4 Q25.9 21.6 34.7 23.2" stroke="#e6eef5" stroke-width="1.9" opacity="0.87"/><path d="M-0.7 66.1 Q15.5 66.2 27.7 66.8" stroke="#8eaacb" stroke-width="1.2" opacity="0.87"/><path d="M26.6 80.1 Q39.9 80.4 54.9 71.8" stroke="#e6eef5" stroke-width="2.0" opacity="0.62"/><path d="M4.0 15.1 Q15.3 19.0 32.2 16.4" stroke="#8eaacb" stroke-width="2.4" opacity="0.81"/><path d="M28.5 54.9 Q38.3 52.4 40.5 46.9" stroke="#e6eef5" stroke-width="1.7" opacity="0.92"/><path d="M37.7 87.2 Q47.9 79.5 62.1 75.9" stroke="#8eaacb" stroke-width="1.3" opacity="0.78"/><path d="M18.5 41.9 Q24.5 42.4 32.8 43.7" stroke="#e6eef5" stroke-width="1.8" opacity="0.91"/><path d="M36.3 91.8 Q46.8 85.1 57.0 88.1" stroke="#8eaacb" stroke-width="1.6" opacity="0.62"/><path d="M-9.6 79.9 Q-0.4 78.8 5.2 76.6" stroke="#e6eef5" stroke-width="1.5" opacity="0.76"/><path d="M51.1 78.4 Q56.0 75.1 64.8 76.3" stroke="#8eaacb" stroke-width="2.1" opacity="0.75"/><path d="M51.8 76.0 Q66.5 72.6 79.4 69.1" stroke="#e6eef5" stroke-width="1.7" opacity="0.83"/><path d="M39.8 53.3 Q51.5 58.7 60.1 56.5" stroke="#8eaacb" stroke-width="2.3" opacity="0.65"/><path d="M51.5 94.3 Q60.5 87.4 75.5 81.6" stroke="#e6eef5" stroke-width="1.1" opacity="0.65"/><path d="M-2.0 66.9 Q8.2 70.6 24.0 70.0" stroke="#8eaacb" stroke-width="1.9" opacity="0.61"/><path d="M87.1 96.8 Q94.2 97.9 102.9 99.3" stroke="#e6eef5" stroke-width="2.4" opacity="0.88"/><path d="M7.8 43.2 Q15.4 37.9 27.9 36.3" stroke="#8eaacb" stroke-width="2.0" opacity="0.56"/><path d="M50.9 44.0 Q57.8 42.1 62.6 40.0" stroke="#e6eef5" stroke-width="1.1" opacity="0.94"/><path d="M76.7 97.2 Q79.5 97.3 89.6 91.9" stroke="#8eaacb" stroke-width="1.4" opacity="0.60"/><path d="M36.4 91.1 Q46.0 90.2 61.1 80.9" stroke="#e6eef5" stroke-width="1.8" opacity="0.83"/><path d="M-0.2 5.8 Q8.2 7.0 23.4 -0.5" stroke="#8eaacb" stroke-width="1.9" opacity="0.87"/><path d="M-0.8 85.6 Q5.4 84.6 12.4 86.8" stroke="#e6eef5" stroke-width="1.8" opacity="0.92"/><path d="M19.5 12.9 Q26.2 5.3 39.2 4.4" stroke="#8eaacb" stroke-width="1.1" opacity="0.63"/><path d="M24.3 30.5 Q36.3 22.7 48.3 21.3" stroke="#e6eef5" stroke-width="1.5" opacity="0.56"/><path d="M17.5 1.5 Q27.5 -0.7 42.4 -2.5" stroke="#8eaacb" stroke-width="2.3" opacity="0.59"/><path d="M80.1 43.2 Q89.7 44.0 100.9 44.6" stroke="#e6eef5" stroke-width="2.0" opacity="0.94"/><path d="M27.7 83.2 Q39.2 80.6 52.3 81.0" stroke="#8eaacb" stroke-width="1.1" opacity="0.60"/><path d="M-2.2 74.1 Q1.9 73.7 12.6 66.6" stroke="#e6eef5" stroke-width="2.2" opacity="0.82"/><path d="M21.0 24.2 Q26.7 21.7 37.8 20.2" stroke="#8eaacb" stroke-width="1.4" opacity="0.93"/><path d="M97.0 54.7 Q103.5 54.7 113.1 57.5" stroke="#e6eef5" stroke-width="1.0" opacity="0.70"/><path d="M42.2 50.3 Q45.9 46.4 57.5 47.2" stroke="#8eaacb" stroke-width="1.1" opacity="0.71"/><path d="M-5.4 2.2 Q3.3 -1.0 10.6 -4.8" stroke="#e6eef5" stroke-width="2.1" opacity="0.81"/><path d="M68.8 87.9 Q81.6 81.2 86.7 81.6" stroke="#8eaacb" stroke-width="2.0" opacity="0.81"/><path d="M-5.2 83.5 Q10.6 85.3 22.7 80.8" stroke="#e6eef5" stroke-width="1.2" opacity="0.76"/><path d="M45.5 83.5 Q59.4 88.2 71.9 85.1" stroke="#8eaacb" stroke-width="2.0" opacity="0.83"/><path d="M15.3 3.1 Q19.0 4.3 29.0 -1.3" stroke="#e6eef5" stroke-width="1.8" opacity="0.80"/><path d="M58.9 68.1 Q69.9 64.7 76.1 56.4" stroke="#8eaacb" stroke-width="1.7" opacity="0.76"/><path d="M62.5 6.6 Q70.8 -0.6 85.8 -3.2" stroke="#e6eef5" stroke-width="2.0" opacity="0.63"/><path d="M71.4 97.6 Q81.2 96.4 91.4 91.5" stroke="#8eaacb" stroke-width="2.1" opacity="0.80"/><path d="M60.7 7.7 Q69.4 3.0 74.2 2.1" stroke="#e6eef5" stroke-width="1.8" opacity="0.55"/><path d="M-3.3 26.9 Q10.1 24.2 20.7 25.8" stroke="#8eaacb" stroke-width="1.7" opacity="0.74"/><path d="M41.3 11.9 Q57.8 10.2 66.7 -0.1" stroke="#e6eef5" stroke-width="1.0" opacity="0.73"/><path d="M80.2 96.8 Q87.2 97.5 98.8 89.3" stroke="#8eaacb" stroke-width="1.3" opacity="0.78"/><path d="M5.6 52.4 Q21.0 45.6 31.3 38.6" stroke="#e6eef5" stroke-width="2.2" opacity="0.83"/><path d="M15.5 89.8 Q20.2 84.0 32.8 78.4" stroke="#8eaacb" stroke-width="1.6" opacity="0.67"/><path d="M5.5 34.4 Q10.3 37.5 23.1 35.7" stroke="#e6eef5" stroke-width="2.2" opacity="0.60"/><path d="M91.9 71.3 Q104.1 65.2 118.2 61.1" stroke="#8eaacb" stroke-width="2.4" opacity="0.79"/>
<path d="M0 45 Q12 40 24 46" stroke="#e9eddc" stroke-width="5" opacity="0.6"/>
</g>
<ellipse cx="101" cy="27" rx="10" ry="12" fill="#eab03a" filter="url(#gpbl2)"/>
<g filter="url(#gpbl2)">
<path d="M49 4.5 Q38 5 35 17 Q32.5 30 32.5 44 Q31 56 29.5 68 L40 68 L40 52 L60 52 L61 66 L70.5 64 Q67.5 50 67 40 Q67.5 22 63.5 12 Q58.5 4.5 49 4.5Z" fill="#18181d"/>
<rect x="44.5" y="38" width="10.5" height="14" fill="#dcc2b6"/>
<path d="M39 19 Q50 12 61 17 Q62.5 30 60 38 Q55 44 50 43.5 Q43 43 41 37 Q38.5 28 39 19Z" fill="#ecd6cc"/>
<path d="M37 15 Q50 7 63 14 L62 21 Q55 16 47 20 Q42 24 38.5 31Z" fill="#18181d"/>
<path d="M33 36 Q36 30 39 24 L40.5 42 Q37 52 32 58Z" fill="#18181d"/>
<path d="M61 24 L65.5 30 L65 58 Q60 50 59.5 40Z" fill="#18181d"/>
<ellipse cx="45" cy="27.5" rx="2.3" ry="1" fill="#3e2c2c"/>
<ellipse cx="55.5" cy="27.5" rx="2.3" ry="1" fill="#3e2c2c"/>
<ellipse cx="49.5" cy="36" rx="2.7" ry="1.2" fill="#c4585a"/>
<path d="M17 100 L15 76 Q15 56 31 52.5 L44 50.5 Q50 55 56 50.5 L67 52.5 Q77.5 56 77 70 L76.5 78 L72 78 L71 100Z" fill="#141417"/>
<path d="M31 56 Q30 66 28 74 L36 72Z" fill="#0c0c0e" opacity="0.7"/>
<path d="M16 77 L25.5 77 L26.5 100 L17.5 100Z" fill="#e6cfc3"/>
<path d="M66.5 77 L75.5 77 L74.5 100 L66 100Z" fill="#e2cabd"/>
<path d="M33 91 Q33.5 69 47 67.5 Q60.5 69 61 91 Z" fill="#e6b44a"/>
<circle cx="38.5" cy="75" r="3" fill="#f2e4c0"/>
<path d="M52 72 Q57 74 58 80 L51 80Z" fill="#d8703a"/>
<path d="M33.5 82 Q47 77 60.5 82 L61 91 L33 91Z" fill="#3c6cac"/>
<path d="M34 86 Q47 82.5 60 86" stroke="#8fc0e0" stroke-width="1.2" fill="none"/>
<rect x="46.5" y="68" width="1.3" height="23" fill="#2e2e2e"/>
<path d="M31 90.5 H63 L63.5 96.5 H30.5Z" fill="#d9b447"/>
<path d="M33 92.3 H61 M33 94.8 H61" stroke="#5a4a20" stroke-width="0.6" opacity="0.55"/>
</g>
</svg>
<div style="position:absolute;left:775.2px;width:400px;top:444.64px;line-height:7.92px;font-size:6.6px;color:#a8a8a8;font-weight:400;font-family:'Liberation Sans', sans-serif;white-space:pre;text-align:center;">512 × 512</div>
<div style="position:absolute;left:169.3px;top:263.9px;width:168.1px;height:54.6px;background:#353535;border-radius:5px;box-shadow:0 1px 3px rgba(0,0,0,0.45);"></div>
<div style="position:absolute;left:169.3px;top:263.9px;width:168.1px;height:19px;background:#323232;border-radius:5px 5px 0 0;"></div>
<div style="position:absolute;left:175.30px;top:270.40px;width:6.00px;height:6.00px;border-radius:50%;background:#686868;"></div>
<div style="position:absolute;left:188.0px;top:267.74px;line-height:10.92px;font-size:9.1px;color:#929292;font-weight:400;font-family:'Liberation Sans', sans-serif;white-space:pre;">IPAdapter Model Loader</div>
<div style="position:absolute;left:329.05px;top:288.95px;width:4.90px;height:4.90px;border-radius:50%;background:#3ddc4e;"></div>
<div style="position:absolute;right:954.5px;top:287.54px;line-height:9.12px;font-size:7.6px;color:#a8a8a8;font-weight:400;font-family:'Liberation Sans', sans-serif;white-space:pre;text-align:right;">IPADAPTER</div>
<div style="position:absolute;left:180.6px;top:299.80px;width:146.60px;height:11.60px;box-sizing:border-box;background:#1f1f1f;border:1px solid #4c4c4c;border-radius:5.8px;"></div>
<svg style="position:absolute;left:184.60px;top:302.10px;" width="7" height="7"><path d="M6 0.5 L0.5 3.5 L6 6.5Z" fill="#ddd"/></svg>
<svg style="position:absolute;left:317.20px;top:302.10px;" width="7" height="7"><path d="M0.5 0.5 L6 3.5 L0.5 6.5Z" fill="#ddd"/></svg>
<div style="position:absolute;left:191.6px;top:300.80px;line-height:9.60px;font-size:8.0px;color:#e0e0e0;font-weight:400;font-family:'Liberation Sans', sans-serif;white-space:pre;">ip-adapter-plus_sd15.safetens ...</div>
<div style="position:absolute;left:173.5px;top:331.2px;width:166px;height:53.5px;background:#353535;border-radius:5px;box-shadow:0 1px 3px rgba(0,0,0,0.45);"></div>
<div style="position:absolute;left:173.5px;top:331.2px;width:166px;height:19px;background:#323232;border-radius:5px 5px 0 0;"></div>
<div style="position:absolute;left:179.50px;top:337.70px;width:6.00px;height:6.00px;border-radius:50%;background:#686868;"></div>
<div style="position:absolute;left:192.2px;top:335.04px;line-height:10.92px;font-size:9.1px;color:#929292;font-weight:400;font-family:'Liberation Sans', sans-serif;white-space:pre;">Load CLIP Vision</div>
<div style="position:absolute;left:331.35px;top:355.65px;width:4.90px;height:4.90px;border-radius:50%;background:#A8DADC;"></div>
<div style="position:absolute;right:952.2px;top:354.24px;line-height:9.12px;font-size:7.6px;color:#a8a8a8;font-weight:400;font-family:'Liberation Sans', sans-serif;white-space:pre;text-align:right;">CLIP_VISION</div>
<div style="position:absolute;left:183px;top:366.50px;width:146.60px;height:11.60px;box-sizing:border-box;background:#1f1f1f;border:1px solid #4c4c4c;border-radius:5.8px;"></div>
<svg style="position:absolute;left:187.00px;top:368.80px;" width="7" height="7"><path d="M6 0.5 L0.5 3.5 L6 6.5Z" fill="#ddd"/></svg>
<svg style="position:absolute;left:319.60px;top:368.80px;" width="7" height="7"><path d="M0.5 0.5 L6 3.5 L0.5 6.5Z" fill="#ddd"/></svg>
<div style="position:absolute;left:194px;top:367.50px;line-height:9.60px;font-size:8.0px;color:#e0e0e0;font-weight:400;font-family:'Liberation Sans', sans-serif;white-space:pre;">CLIP-ViT-H-14-laion2B-s32B-b...</div>
<div style="position:absolute;left:182px;top:407px;width:174.3px;height:211.9px;background:#353535;border-radius:5px;box-shadow:0 1px 3px rgba(0,0,0,0.45);"></div>
<div style="position:absolute;left:182px;top:407px;width:174.3px;height:19px;background:#323232;border-radius:5px 5px 0 0;"></div>
<div style="position:absolute;left:188.00px;top:413.50px;width:6.00px;height:6.00px;border-radius:50%;background:#686868;"></div>
<div style="position:absolute;left:200.7px;top:410.84px;line-height:10.92px;font-size:9.1px;color:#929292;font-weight:400;font-family:'Liberation Sans', sans-serif;white-space:pre;">Load Image</div>
<div style="position:absolute;left:348.65px;top:432.45px;width:4.90px;height:4.90px;border-radius:50%;background:#64B5F6;"></div>
<div style="position:absolute;right:934.9px;top:431.04px;line-height:9.12px;font-size:7.6px;color:#a8a8a8;font-weight:400;font-family:'Liberation Sans', sans-serif;white-space:pre;text-align:right;">IMAGE</div>
<div style="position:absolute;left:348.65px;top:444.45px;width:4.90px;height:4.90px;border-radius:50%;background:#81C784;"></div>
<div style="position:absolute;right:934.9px;top:443.04px;line-height:9.12px;font-size:7.6px;color:#a8a8a8;font-weight:400;font-family:'Liberation Sans', sans-serif;white-space:pre;text-align:right;">MASK</div>
<div style="position:absolute;left:191.4px;top:454.90px;width:155.60px;height:11.60px;box-sizing:border-box;background:#1f1f1f;border:1px solid #4c4c4c;border-radius:5.8px;"></div>
<svg style="position:absolute;left:195.40px;top:457.20px;" width="7" height="7"><path d="M6 0.5 L0.5 3.5 L6 6.5Z" fill="#ddd"/></svg>
<svg style="position:absolute;left:337.00px;top:457.20px;" width="7" height="7"><path d="M0.5 0.5 L6 3.5 L0.5 6.5Z" fill="#ddd"/></svg>
<div style="position:absolute;left:203.4px;top:455.90px;line-height:9.60px;font-size:8.0px;color:#a6a6a6;font-weight:400;font-family:'Liberation Sans', sans-serif;white-space:pre;">image</div>
<div style="position:absolute;right:953px;top:455.90px;line-height:9.60px;font-size:8.0px;color:#ececec;font-weight:400;font-family:'Liberation Sans', sans-serif;white-space:pre;text-align:right;">starry_night.jpg</div>
<div style="position:absolute;left:191.4px;top:470px;width:155.6px;height:11.4px;background:#222;border:0.8px solid #444;box-sizing:border-box;"></div>
<div style="position:absolute;left:69.19999999999999px;width:400px;top:470.90px;line-height:9.60px;font-size:8.0px;color:#e0e0e0;font-weight:400;font-family:'Liberation Sans', sans-serif;white-space:pre;text-align:center;">choose file to upload</div>
<svg style="position:absolute;left:189.4px;top:483.3px" width="161" height="127" viewBox="0 0 100 100" preserveAspectRatio="none">
<defs><filter id="snbl"><feGaussianBlur stdDeviation="0.6"/></filter></defs>
<rect width="100" height="100" fill="#3253a6"/>
<g filter="url(#snbl)">
<path d="M0 0 H100 V30 Q70 22 45 18 Q20 14 0 22Z" fill="#3b60b8"/>
<g fill="none" stroke-linecap="round">
<path d="M0 30 Q20 20 40 24 Q60 28 75 18" stroke="#7896d0" stroke-width="2.2" opacity="0.8"/>
<path d="M2 14 Q15 10 28 14" stroke="#6a8ad0" stroke-width="1.6" opacity="0.7"/>
<path d="M45 12 Q60 6 75 10" stroke="#6f8dd0" stroke-width="1.6" opacity="0.7"/>
<path d="M0 40 Q25 32 48 50 Q70 62 100 46" stroke="#b8c8e4" stroke-width="7" opacity="0.9"/>
<path d="M6 47 Q28 42 46 57 Q72 68 100 54" stroke="#93acd8" stroke-width="3" opacity="0.85"/>
<ellipse cx="52" cy="37" rx="13" ry="11" stroke="#a8bde2" stroke-width="4" opacity="0.9"/>
<ellipse cx="52" cy="37" rx="6" ry="5" stroke="#9cb2de" stroke-width="2.5" opacity="0.9"/>
<path d="M68 44 Q84 40 100 36" stroke="#c8d4ea" stroke-width="4" opacity="0.75"/>
<path d="M40 70 Q60 62 100 64" stroke="#5e7fc6" stroke-width="2" opacity="0.8"/>
</g>
<path d="M55 60 Q78 52 100 53 L100 63 Q80 61 62 67Z" fill="#22377a"/>
<path d="M0 74 Q40 68 100 71 L100 100 L0 100Z" fill="#2d4a90"/>
<path d="M30 82 Q60 77 100 81 L100 100 L30 100Z" fill="#35538e"/>
<path d="M40 90 Q70 86 100 90 L100 100 L40 100Z" fill="#283f6c"/>
<ellipse cx="88" cy="21" rx="12" ry="15" fill="#e2e6b8" opacity="0.8"/>
<ellipse cx="88" cy="21" rx="7" ry="9" fill="#eed46a"/>
<path d="M84 14 Q92 18 88 29 Q95 26 93 16 Q90 12 84 14Z" fill="#dca83c"/>
<ellipse cx="8" cy="6" rx="3.4" ry="4.25" fill="#c8d4c0" opacity="0.45"/><ellipse cx="8" cy="6" rx="1.4" ry="1.736" fill="#e8d878"/><ellipse cx="21" cy="6" rx="3.0" ry="3.75" fill="#c8d4c0" opacity="0.45"/><ellipse cx="21" cy="6" rx="1.2" ry="1.488" fill="#e8d878"/><ellipse cx="32" cy="8" rx="3.0" ry="3.75" fill="#c8d4c0" opacity="0.45"/><ellipse cx="32" cy="8" rx="1.2" ry="1.488" fill="#e8d878"/><ellipse cx="41" cy="7" rx="3.0" ry="3.75" fill="#c8d4c0" opacity="0.45"/><ellipse cx="41" cy="7" rx="1.2" ry="1.488" fill="#e8d878"/><ellipse cx="60" cy="10" rx="3.6" ry="4.5" fill="#c8d4c0" opacity="0.45"/><ellipse cx="60" cy="10" rx="1.5" ry="1.8599999999999999" fill="#e8d878"/><ellipse cx="21" cy="18" rx="3.6" ry="4.5" fill="#c8d4c0" opacity="0.45"/><ellipse cx="21" cy="18" rx="1.5" ry="1.8599999999999999" fill="#e8d878"/><ellipse cx="69" cy="23" rx="3.8000000000000003" ry="4.75" fill="#c8d4c0" opacity="0.45"/><ellipse cx="69" cy="23" rx="1.6" ry="1.984" fill="#e8d878"/><ellipse cx="31" cy="33" rx="3.2" ry="4.0" fill="#c8d4c0" opacity="0.45"/><ellipse cx="31" cy="33" rx="1.3" ry="1.612" fill="#e8d878"/><ellipse cx="12" cy="50" rx="3.6" ry="4.5" fill="#c8d4c0" opacity="0.45"/><ellipse cx="12" cy="50" rx="1.5" ry="1.8599999999999999" fill="#e8d878"/><ellipse cx="36" cy="56" rx="5.1" ry="6.375" fill="#c8d4c0" opacity="0.45"/><ellipse cx="36" cy="56" rx="2.25" ry="2.79" fill="#e8d878"/><ellipse cx="3" cy="37" rx="2.6" ry="3.25" fill="#c8d4c0" opacity="0.45"/><ellipse cx="3" cy="37" rx="1.0" ry="1.24" fill="#e8d878"/>
<path d="M17.5 6 Q16.5 20 14.5 35 Q12 55 10.5 72 Q8 88 8 100 L40 100 Q37 90 32 80 Q27 70 25 58 Q22 40 20 24Z" fill="#1d2a24"/>
<path d="M26 66 Q31 80 38 100 L30 100Z" fill="#253228"/>
<circle cx="55" cy="86" r="0.9" fill="#e8c860"/><circle cx="62" cy="88" r="0.9" fill="#e8c860"/><circle cx="48" cy="89" r="0.9" fill="#e8c860"/><circle cx="70" cy="87" r="0.9" fill="#e8c860"/>
</g>
</svg>
<div style="position:absolute;left:70.19999999999999px;width:400px;top:611.54px;line-height:7.92px;font-size:6.6px;color:#a8a8a8;font-weight:400;font-family:'Liberation Sans', sans-serif;white-space:pre;text-align:center;">1280 × 1014</div>
<div style="position:absolute;left:399.5px;top:377.5px;width:170px;height:192px;background:#353535;border-radius:5px;box-shadow:0 1px 3px rgba(0,0,0,0.45);"></div>
<div style="position:absolute;left:399.5px;top:377.5px;width:170px;height:19px;background:#323232;border-radius:5px 5px 0 0;"></div>
<div style="position:absolute;left:396.5px;top:374.5px;width:173.6px;height:195.6px;border:1.2px solid #dedede;border-radius:8px;"></div>
<div style="position:absolute;left:405.50px;top:384.00px;width:6.00px;height:6.00px;border-radius:50%;background:#686868;"></div>
<div style="position:absolute;left:418.2px;top:381.34px;line-height:10.92px;font-size:9.1px;color:#ffffff;font-weight:400;font-family:'Liberation Sans', sans-serif;white-space:pre;">IPAdapter Advanced</div>
<div style="position:absolute;left:404.25px;top:403.35px;width:4.90px;height:4.90px;border-radius:50%;background:#B39DDB;"></div>
<div style="position:absolute;left:412.2px;top:401.94px;line-height:9.12px;font-size:7.6px;color:#a8a8a8;font-weight:400;font-family:'Liberation Sans', sans-serif;white-space:pre;">model</div>
<div style="position:absolute;left:404.25px;top:416.05px;width:4.90px;height:4.90px;border-radius:50%;background:#3ddc4e;"></div>
<div style="position:absolute;left:412.2px;top:414.64px;line-height:9.12px;font-size:7.6px;color:#a8a8a8;font-weight:400;font-family:'Liberation Sans', sans-serif;white-space:pre;">ipadapter</div>
<div style="position:absolute;left:404.25px;top:428.45px;width:4.90px;height:4.90px;border-radius:50%;background:#64B5F6;"></div>
<div style="position:absolute;left:412.2px;top:427.04px;line-height:9.12px;font-size:7.6px;color:#a8a8a8;font-weight:400;font-family:'Liberation Sans', sans-serif;white-space:pre;">image</div>
<div style="position:absolute;left:404.25px;top:440.85px;width:4.90px;height:4.90px;border-radius:50%;background:#64B5F6;"></div>
<div style="position:absolute;left:412.2px;top:439.44px;line-height:9.12px;font-size:7.6px;color:#a8a8a8;font-weight:400;font-family:'Liberation Sans', sans-serif;white-space:pre;">image_negative</div>
<div style="position:absolute;left:404.25px;top:453.25px;width:4.90px;height:4.90px;border-radius:50%;background:#81C784;"></div>
<div style="position:absolute;left:412.2px;top:451.84px;line-height:9.12px;font-size:7.6px;color:#a8a8a8;font-weight:400;font-family:'Liberation Sans', sans-serif;white-space:pre;">attn_mask</div>
<div style="position:absolute;left:404.25px;top:465.55px;width:4.90px;height:4.90px;border-radius:50%;background:#A8DADC;"></div>
<div style="position:absolute;left:412.2px;top:464.14px;line-height:9.12px;font-size:7.6px;color:#a8a8a8;font-weight:400;font-family:'Liberation Sans', sans-serif;white-space:pre;">clip_vision</div>
<div style="position:absolute;left:559.75px;top:403.35px;width:4.90px;height:4.90px;border-radius:50%;background:#B39DDB;"></div>
<div style="position:absolute;right:723.8px;top:401.94px;line-height:9.12px;font-size:7.6px;color:#a8a8a8;font-weight:400;font-family:'Liberation Sans', sans-serif;white-space:pre;text-align:right;">MODEL</div>
<div style="position:absolute;left:411.7px;top:475.30px;width:145.50px;height:11.60px;box-sizing:border-box;background:#1f1f1f;border:1px solid #4c4c4c;border-radius:5.8px;"></div>
<svg style="position:absolute;left:415.70px;top:477.60px;" width="7" height="7"><path d="M6 0.5 L0.5 3.5 L6 6.5Z" fill="#ddd"/></svg>
<svg style="position:absolute;left:547.20px;top:477.60px;" width="7" height="7"><path d="M0.5 0.5 L6 3.5 L0.5 6.5Z" fill="#ddd"/></svg>
<div style="position:absolute;left:423.7px;top:476.30px;line-height:9.60px;font-size:8.0px;color:#a6a6a6;font-weight:400;font-family:'Liberation Sans', sans-serif;white-space:pre;">weight</div>
<div style="position:absolute;right:742.8px;top:476.30px;line-height:9.60px;font-size:8.0px;color:#ececec;font-weight:400;font-family:'Liberation Sans', sans-serif;white-space:pre;text-align:right;">0.60</div>
<div style="position:absolute;left:411.7px;top:490.14px;width:145.50px;height:11.60px;box-sizing:border-box;background:#1f1f1f;border:1px solid #4c4c4c;border-radius:5.8px;"></div>
<svg style="position:absolute;left:415.70px;top:492.44px;" width="7" height="7"><path d="M6 0.5 L0.5 3.5 L6 6.5Z" fill="#777"/></svg>
<svg style="position:absolute;left:547.20px;top:492.44px;" width="7" height="7"><path d="M0.5 0.5 L6 3.5 L0.5 6.5Z" fill="#ddd"/></svg>
<div style="position:absolute;left:423.7px;top:491.14px;line-height:9.60px;font-size:8.0px;color:#a6a6a6;font-weight:400;font-family:'Liberation Sans', sans-serif;white-space:pre;">weight_type</div>
<div style="position:absolute;right:742.8px;top:491.14px;line-height:9.60px;font-size:8.0px;color:#ececec;font-weight:400;font-family:'Liberation Sans', sans-serif;white-space:pre;text-align:right;">linear</div>
<div style="position:absolute;left:411.7px;top:504.98px;width:145.50px;height:11.60px;box-sizing:border-box;background:#1f1f1f;border:1px solid #4c4c4c;border-radius:5.8px;"></div>
<svg style="position:absolute;left:415.70px;top:507.28px;" width="7" height="7"><path d="M6 0.5 L0.5 3.5 L6 6.5Z" fill="#777"/></svg>
<svg style="position:absolute;left:547.20px;top:507.28px;" width="7" height="7"><path d="M0.5 0.5 L6 3.5 L0.5 6.5Z" fill="#ddd"/></svg>
<div style="position:absolute;left:423.7px;top:505.98px;line-height:9.60px;font-size:8.0px;color:#a6a6a6;font-weight:400;font-family:'Liberation Sans', sans-serif;white-space:pre;">combine_embeds</div>
<div style="position:absolute;right:742.8px;top:505.98px;line-height:9.60px;font-size:8.0px;color:#ececec;font-weight:400;font-family:'Liberation Sans', sans-serif;white-space:pre;text-align:right;">concat</div>
<div style="position:absolute;left:411.7px;top:519.82px;width:145.50px;height:11.60px;box-sizing:border-box;background:#1f1f1f;border:1px solid #4c4c4c;border-radius:5.8px;"></div>
<svg style="position:absolute;left:415.70px;top:522.12px;" width="7" height="7"><path d="M6 0.5 L0.5 3.5 L6 6.5Z" fill="#ddd"/></svg>
<svg style="position:absolute;left:547.20px;top:522.12px;" width="7" height="7"><path d="M0.5 0.5 L6 3.5 L0.5 6.5Z" fill="#ddd"/></svg>
<div style="position:absolute;left:423.7px;top:520.82px;line-height:9.60px;font-size:8.0px;color:#a6a6a6;font-weight:400;font-family:'Liberation Sans', sans-serif;white-space:pre;">start_at</div>
<div style="position:absolute;right:742.8px;top:520.82px;line-height:9.60px;font-size:8.0px;color:#ececec;font-weight:400;font-family:'Liberation Sans', sans-serif;white-space:pre;text-align:right;">0.000</div>
<div style="position:absolute;left:411.7px;top:534.66px;width:145.50px;height:11.60px;box-sizing:border-box;background:#1f1f1f;border:1px solid #4c4c4c;border-radius:5.8px;"></div>
<svg style="position:absolute;left:415.70px;top:536.96px;" width="7" height="7"><path d="M6 0.5 L0.5 3.5 L6 6.5Z" fill="#ddd"/></svg>
<svg style="position:absolute;left:547.20px;top:536.96px;" width="7" height="7"><path d="M0.5 0.5 L6 3.5 L0.5 6.5Z" fill="#777"/></svg>
<div style="position:absolute;left:423.7px;top:535.66px;line-height:9.60px;font-size:8.0px;color:#a6a6a6;font-weight:400;font-family:'Liberation Sans', sans-serif;white-space:pre;">end_at</div>
<div style="position:absolute;right:742.8px;top:535.66px;line-height:9.60px;font-size:8.0px;color:#ececec;font-weight:400;font-family:'Liberation Sans', sans-serif;white-space:pre;text-align:right;">1.000</div>
<div style="position:absolute;left:411.7px;top:549.50px;width:145.50px;height:11.60px;box-sizing:border-box;background:#1f1f1f;border:1px solid #4c4c4c;border-radius:5.8px;"></div>
<svg style="position:absolute;left:415.70px;top:551.80px;" width="7" height="7"><path d="M6 0.5 L0.5 3.5 L6 6.5Z" fill="#777"/></svg>
<svg style="position:absolute;left:547.20px;top:551.80px;" width="7" height="7"><path d="M0.5 0.5 L6 3.5 L0.5 6.5Z" fill="#ddd"/></svg>
<div style="position:absolute;left:423.7px;top:550.50px;line-height:9.60px;font-size:8.0px;color:#a6a6a6;font-weight:400;font-family:'Liberation Sans', sans-serif;white-space:pre;">embeds_scaling</div>
<div style="position:absolute;right:742.8px;top:550.50px;line-height:9.60px;font-size:8.0px;color:#ececec;font-weight:400;font-family:'Liberation Sans', sans-serif;white-space:pre;text-align:right;">V only</div>
<div style="position:absolute;left:594.2px;top:432.5px;width:166px;height:83.7px;background:#353535;border-radius:5px;box-shadow:0 1px 3px rgba(0,0,0,0.45);"></div>
<div style="position:absolute;left:594.2px;top:432.5px;width:166px;height:19px;background:#323232;border-radius:5px 5px 0 0;"></div>
<div style="position:absolute;left:600.20px;top:439.00px;width:6.00px;height:6.00px;border-radius:50%;background:#686868;"></div>
<div style="position:absolute;left:612.9000000000001px;top:436.34px;line-height:10.92px;font-size:9.1px;color:#929292;font-weight:400;font-family:'Liberation Sans', sans-serif;white-space:pre;">Empty Latent Image</div>
<div style="position:absolute;left:752.25px;top:457.35px;width:4.90px;height:4.90px;border-radius:50%;background:#FF9CF9;"></div>
<div style="position:absolute;right:531.3px;top:455.94px;line-height:9.12px;font-size:7.6px;color:#a8a8a8;font-weight:400;font-family:'Liberation Sans', sans-serif;white-space:pre;text-align:right;">LATENT</div>
<div style="position:absolute;left:604.2px;top:467.40px;width:147.20px;height:11.60px;box-sizing:border-box;background:#1f1f1f;border:1px solid #4c4c4c;border-radius:5.8px;"></div>
<svg style="position:absolute;left:608.20px;top:469.70px;" width="7" height="7"><path d="M6 0.5 L0.5 3.5 L6 6.5Z" fill="#ddd"/></svg>
<svg style="position:absolute;left:741.40px;top:469.70px;" width="7" height="7"><path d="M0.5 0.5 L6 3.5 L0.5 6.5Z" fill="#ddd"/></svg>
<div style="position:absolute;left:616.2px;top:468.40px;line-height:9.60px;font-size:8.0px;color:#a6a6a6;font-weight:400;font-family:'Liberation Sans', sans-serif;white-space:pre;">width</div>
<div style="position:absolute;right:548.6px;top:468.40px;line-height:9.60px;font-size:8.0px;color:#ececec;font-weight:400;font-family:'Liberation Sans', sans-serif;white-space:pre;text-align:right;">512</div>
<div style="position:absolute;left:604.2px;top:482.20px;width:147.20px;height:11.60px;box-sizing:border-box;background:#1f1f1f;border:1px solid #4c4c4c;border-radius:5.8px;"></div>
<svg style="position:absolute;left:608.20px;top:484.50px;" width="7" height="7"><path d="M6 0.5 L0.5 3.5 L6 6.5Z" fill="#ddd"/></svg>
<svg style="position:absolute;left:741.40px;top:484.50px;" width="7" height="7"><path d="M0.5 0.5 L6 3.5 L0.5 6.5Z" fill="#ddd"/></svg>
<div style="position:absolute;left:616.2px;top:483.20px;line-height:9.60px;font-size:8.0px;color:#a6a6a6;font-weight:400;font-family:'Liberation Sans', sans-serif;white-space:pre;">height</div>
<div style="position:absolute;right:548.6px;top:483.20px;line-height:9.60px;font-size:8.0px;color:#ececec;font-weight:400;font-family:'Liberation Sans', sans-serif;white-space:pre;text-align:right;">512</div>
<div style="position:absolute;left:604.2px;top:497.00px;width:147.20px;height:11.60px;box-sizing:border-box;background:#1f1f1f;border:1px solid #4c4c4c;border-radius:5.8px;"></div>
<svg style="position:absolute;left:608.20px;top:499.30px;" width="7" height="7"><path d="M6 0.5 L0.5 3.5 L6 6.5Z" fill="#777"/></svg>
<svg style="position:absolute;left:741.40px;top:499.30px;" width="7" height="7"><path d="M0.5 0.5 L6 3.5 L0.5 6.5Z" fill="#ddd"/></svg>
<div style="position:absolute;left:616.2px;top:498.00px;line-height:9.60px;font-size:8.0px;color:#a6a6a6;font-weight:400;font-family:'Liberation Sans', sans-serif;white-space:pre;">batch_size</div>
<div style="position:absolute;right:548.6px;top:498.00px;line-height:9.60px;font-size:8.0px;color:#ececec;font-weight:400;font-family:'Liberation Sans', sans-serif;white-space:pre;text-align:right;">1</div>
<div style="position:absolute;left:245.5px;top:252px;width:89.5px;height:11.399999999999977px;background:#0b1c0f;border-radius:2px;"></div>
<div style="position:absolute;left:90.25px;width:400px;top:253.14px;line-height:9.12px;font-size:7.6px;color:#ffffff;font-weight:700;font-family:'Liberation Sans', sans-serif;white-space:pre;text-align:center;">comfyui_ipadapter_plus</div>
<div style="position:absolute;left:475.5px;top:367.2px;width:90.0px;height:10.400000000000034px;background:#0b1c0f;border-radius:2px;"></div>
<div style="position:absolute;left:320.5px;width:400px;top:367.84px;line-height:9.12px;font-size:7.6px;color:#ffffff;font-weight:700;font-family:'Liberation Sans', sans-serif;white-space:pre;text-align:center;">comfyui_ipadapter_plus</div>
<div style="position:absolute;left:0px;top:0px;width:1280px;height:22px;background:#161616;border-bottom:1px solid #262626;box-sizing:border-box;"></div>
<div style="position:absolute;left:44px;top:3px;width:1px;height:16px;background:#242424;"></div>
<div style="position:absolute;left:138px;top:3px;width:1px;height:16px;background:#242424;"></div>
<div style="position:absolute;left:211.5px;top:3px;width:1px;height:16px;background:#242424;"></div>
<div style="position:absolute;left:300px;top:3px;width:1px;height:16px;background:#242424;"></div>
<div style="position:absolute;left:10.8px;top:7.56px;line-height:8.88px;font-size:7.4px;color:#8a8a8a;font-weight:400;font-family:'Liberation Sans', sans-serif;white-space:pre;">base</div>
<div style="position:absolute;left:50.6px;top:7.56px;line-height:8.88px;font-size:7.4px;color:#8a8a8a;font-weight:400;font-family:'Liberation Sans', sans-serif;white-space:pre;">test_ipadapter_face...</div>
<div style="position:absolute;left:146.5px;top:7.80px;line-height:8.40px;font-size:7.0px;color:#8a8a8a;font-weight:400;font-family:'Liberation Sans', sans-serif;white-space:pre;">txt2img_webui</div>
<div style="position:absolute;left:206px;top:3px;width:95px;height:19px;background:#1b1b1b;"></div>
<div style="position:absolute;left:215.6px;top:7.80px;line-height:8.40px;font-size:7.0px;color:#ffffff;font-weight:700;font-family:'Liberation Sans', sans-serif;white-space:pre;">test_ipadapter_base</div>
<div style="position:absolute;left:289.00px;top:9.70px;width:4.60px;height:4.60px;border-radius:50%;background:#f0f0f0;"></div>
<div style="position:absolute;left:212px;top:19.8px;width:88px;height:1.3px;background:#3b82c4;"></div>
<div style="position:absolute;left:306.8px;top:11.6px;width:6px;height:0.9px;background:#bbb;"></div>
<div style="position:absolute;left:309.35px;top:9.1px;width:0.9px;height:6px;background:#bbb;"></div>
<div style="position:absolute;left:0px;top:22px;width:32.5px;height:636px;background:#171717;border-right:1.2px solid #252525;box-sizing:border-box;"></div>
<div style="position:absolute;left:9.1px;top:26px;width:14.6px;height:16.3px;background:#000;border-radius:2.5px;"></div>
<svg style="position:absolute;left:9.1px;top:26px" width="14.6" height="16.3"><path d="M6.8 4.2 H11.6 L10.8 6.9 H7.9 Q6.9 6.9 6.6 7.9 L6.4 8.7 Q6.2 9.6 7.2 9.6 H9.9 L9.1 12.3 H4.8 Q3 12.3 3.4 10.3 L4.1 7.2 Q4.8 4.2 6.8 4.2Z" fill="#f4f4f4"/></svg>
<svg style="position:absolute;left:10.0px;top:53.2px" width="12" height="12" fill="none" stroke="#bdbdbd" stroke-width="1.15"><rect x="2" y="2" width="8" height="8" rx="1"/><path d="M5 2v8M5 6h5"/></svg>
<svg style="position:absolute;left:10.0px;top:76.7px" width="12" height="12" fill="none" stroke="#bdbdbd" stroke-width="1.15"><circle cx="6.5" cy="6" r="2.6"/><path d="M1 6h3M9 6h2.5"/></svg>
<svg style="position:absolute;left:10.0px;top:100.6px" width="12" height="12" fill="none" stroke="#bdbdbd" stroke-width="1.15"><rect x="2" y="5.5" width="3" height="3"/><rect x="6.5" y="5.5" width="3" height="3"/><rect x="2" y="9" width="3" height="2.5"/><rect x="6.5" y="9" width="3" height="2.5"/><circle cx="8.5" cy="2.8" r="1.6"/></svg>
<svg style="position:absolute;left:10.0px;top:124.1px" width="12" height="12" fill="none" stroke="#bdbdbd" stroke-width="1.15"><circle cx="3.5" cy="3.5" r="1.7"/><circle cx="8.5" cy="3.5" r="1.7"/><circle cx="8.5" cy="9" r="1.7"/><path d="M3.5 5.2v2.5q0 1.3 1.3 1.3H6.8"/></svg>
<svg style="position:absolute;left:10.0px;top:148.5px" width="12" height="12" fill="none" stroke="#bdbdbd" stroke-width="1.15"><rect x="2" y="2" width="8" height="3.3" rx="0.6"/><rect x="2" y="6.8" width="8" height="3.3" rx="0.6"/><path d="M6 2v3.3M6 6.8v3.3"/></svg>
<svg style="position:absolute;left:10.0px;top:563.6px" width="12" height="12" fill="none" stroke="#bdbdbd" stroke-width="1.15"><circle cx="6" cy="6" r="4.6"/><path d="M4.6 4.8q0.3-1.4 1.5-1.4q1.5 0 1.5 1.3q0 1-1.5 1.5v1"/><circle cx="6" cy="8.6" r="0.3"/></svg>
<svg style="position:absolute;left:10.0px;top:587.5px" width="12" height="12" fill="none" stroke="#bdbdbd" stroke-width="1.15"><path d="M2.5 3.5l3 2.5-3 2.5M6.5 9h4"/></svg>
<svg style="position:absolute;left:10.0px;top:611.1px" width="12" height="12" fill="none" stroke="#bdbdbd" stroke-width="1.15"><rect x="1.5" y="2.8" width="9" height="6.6"/><path d="M3 7.6h6M3 4.6h1M5 4.6h1M7 4.6h1"/></svg>
<svg style="position:absolute;left:10.0px;top:635.3px" width="12" height="12" fill="none" stroke="#bdbdbd" stroke-width="1.15"><path d="M6 1.5l4.5 2.5v4.5L6 11 1.5 8.5V4z"/><path d="M4.3 4.6v4.2M7.7 4.6v4.2M4.3 6.6h3.4"/></svg>
<div style="position:absolute;left:33px;top:24.5px;width:99px;height:21.5px;background:#1a1a1a;border:1px solid #242424;box-sizing:border-box;border-radius:3px;"></div>
<div style="position:absolute;left:41.6px;top:30.50px;line-height:9.60px;font-size:8.0px;color:#f0f0f0;font-weight:700;font-family:'Liberation Sans', sans-serif;white-space:pre;">test_ipadapter_base</div>
<svg style="position:absolute;left:123.5px;top:33px" width="5" height="4"><path d="M0.5 0.8L2.5 2.8L4.5 0.8" stroke="#ddd" stroke-width="0.9" fill="none"/></svg>
<div style="position:absolute;left:903.7px;top:23.6px;width:220px;height:23.8px;background:#121212;border-radius:4px;"></div>
<div style="position:absolute;left:907.8px;top:28.8px;width:113.5px;height:13px;background:#6e6e6e;border-radius:3px;"></div>
<div style="position:absolute;left:907.8px;top:28.8px;width:46.8px;height:13px;background:#2e6aa6;border-radius:3px 0 0 3px;"></div>
<svg style="position:absolute;left:912px;top:31px" width="8" height="8"><path d="M1 6.5Q1 2 4.5 1.5L6 1 7 3 5.5 4 6.5 6.5 4.5 7 3.5 5.5 1.8 7z" fill="#fff"/></svg>
<div style="position:absolute;left:923.6px;top:32.00px;line-height:7.80px;font-size:6.5px;color:#ffffff;font-weight:700;font-family:'Liberation Sans', sans-serif;white-space:pre;">Manager</div>
<svg style="position:absolute;left:959.5px;top:31.8px" width="8" height="8"><path d="M4 0.5L5 3H7.6L5.5 4.6 6.3 7.3 4 5.7 1.7 7.3 2.5 4.6 0.4 3H3z" fill="#fff"/></svg>
<svg style="position:absolute;left:975.5px;top:31.3px" width="8" height="8" stroke="#fff" stroke-width="0.9" fill="none"><path d="M2.5 1h3v3h-3zM0.5 4.5h7v3h-7zM4 4.5v3"/></svg>
<svg style="position:absolute;left:991.5px;top:31.3px" width="8" height="8" stroke="#fff" stroke-width="0.9" fill="none"><path d="M1 7.5L4 0.8 7 7.5M2.5 5h3"/></svg>
<svg style="position:absolute;left:1010px;top:31.5px" width="8" height="8"><path d="M0.8 7Q1.5 3 5 3V1L7.6 3.8 5 6.4V4.6Q2.5 4.6 0.8 7z" fill="#fff"/></svg>
<div style="position:absolute;left:1025.4px;top:28.9px;width:85.2px;height:12.9px;background:#6e6e6e;border-radius:3px;"></div>
<div style="position:absolute;left:1029.5px;top:31.3px;width:7px;height:8px;background:#d8dde6;border-radius:1.5px;"></div>
<div style="position:absolute;left:1040px;top:32.06px;line-height:7.68px;font-size:6.4px;color:#ffffff;font-weight:700;font-family:'Liberation Sans', sans-serif;white-space:pre;">Show Image Feed</div>
<svg style="position:absolute;left:1096px;top:31px" width="9" height="9"><path d="M8.5 0.5L0.5 4.5 8.5 8.5z" fill="#3fb27f"/></svg>
<div style="position:absolute;left:1113.40px;top:31.20px;width:1.20px;height:1.20px;border-radius:50%;background:#aaa;"></div>
<div style="position:absolute;left:1116.90px;top:31.20px;width:1.20px;height:1.20px;border-radius:50%;background:#aaa;"></div>
<div style="position:absolute;left:1113.40px;top:34.40px;width:1.20px;height:1.20px;border-radius:50%;background:#aaa;"></div>
<div style="position:absolute;left:1116.90px;top:34.40px;width:1.20px;height:1.20px;border-radius:50%;background:#aaa;"></div>
<div style="position:absolute;left:1113.40px;top:37.60px;width:1.20px;height:1.20px;border-radius:50%;background:#aaa;"></div>
<div style="position:absolute;left:1116.90px;top:37.60px;width:1.20px;height:1.20px;border-radius:50%;background:#aaa;"></div>
<div style="position:absolute;left:1122.8px;top:24.6px;width:84.5px;height:20.3px;background:#050505;border-radius:4px;"></div>
<div style="position:absolute;left:1122.8px;top:24.6px;width:37.2px;height:20.3px;background:#9cc8f8;border-radius:4px 0 0 4px;"></div>
<div style="position:absolute;left:1160px;top:24.6px;width:19.8px;height:20.3px;background:#6aa6f2;"></div>
<svg style="position:absolute;left:1128px;top:30px" width="9" height="9"><path d="M1.5 1L7.5 4.5 1.5 8z" stroke="#2c4a6a" stroke-width="0.9" fill="none" stroke-linejoin="round"/></svg>
<div style="position:absolute;left:1141.5px;top:31.24px;line-height:7.92px;font-size:6.6px;color:#2c4a6a;font-weight:400;font-family:'Liberation Sans', sans-serif;white-space:pre;">Run</div>
<svg style="position:absolute;left:1165.5px;top:32px" width="9" height="6"><path d="M1 1L4.5 4.5 8 1" stroke="#1f3e66" stroke-width="1.1" fill="none"/></svg>
<div style="position:absolute;left:987.2px;width:400px;top:30.40px;line-height:9.60px;font-size:8px;color:#f0f0f0;font-weight:700;font-family:'Liberation Sans', sans-serif;white-space:pre;text-align:center;">1</div>
<svg style="position:absolute;left:1197.5px;top:27.5px" width="8" height="14" stroke="#bbb" stroke-width="0.8" fill="none"><path d="M1.5 4L4 1.5 6.5 4M1.5 10L4 12.5 6.5 10"/></svg>
<div style="position:absolute;left:1211.7px;top:26.7px;width:16.3px;height:16.3px;background:#6e2626;border-radius:3px;"></div>
<svg style="position:absolute;left:1216.8px;top:31.8px" width="6" height="6" stroke="#d89a9a" stroke-width="1" ><path d="M0.8 0.8L5.2 5.2M5.2 0.8L0.8 5.2"/></svg>
<div style="position:absolute;left:1231px;top:26.7px;width:16.3px;height:16.3px;background:#1c1c1c;border-radius:3px;"></div>
<svg style="position:absolute;left:1234.5px;top:30px" width="10" height="10" stroke="#eee" stroke-width="1" fill="none"><path d="M1.5 5A3.6 3.6 0 1 0 2.6 2.4M1.2 1.2v2.2h2.2M5 3v2.2l1.5 1"/></svg>
<div style="position:absolute;left:1251px;top:26.7px;width:16.3px;height:16.3px;background:#1c1c1c;border-radius:3px;"></div>
<svg style="position:absolute;left:1254.5px;top:30.5px" width="10" height="10" stroke="#eee" stroke-width="1" fill="none"><rect x="1" y="1" width="8" height="8" rx="1"/><path d="M6 1v8"/></svg>
<div style="position:absolute;left:1097.4px;top:48.5px;width:175.9px;height:16.3px;background:#1f1f1f;border:0.7px solid #2b2b2b;box-sizing:border-box;border-radius:3px;"></div>
<div style="position:absolute;left:1103.4px;top:50.7px;width:13.3px;height:13.3px;background:#c2cfdc;border-radius:3px;"></div>
<div style="position:absolute;left:1107.3px;top:52.3px;width:5.6px;height:11.7px;background:#24242a;border-radius:2.5px 2.5px 0 0;"></div>
<div style="position:absolute;left:1119.8px;top:53.54px;line-height:7.92px;font-size:6.6px;color:#f0f0f0;font-weight:700;font-family:'Liberation Sans', sans-serif;white-space:pre;">1 job completed</div>
<svg style="position:absolute;left:1264.5px;top:55px" width="7" height="5"><path d="M0.8 0.8L3.5 3.5 6.2 0.8" stroke="#888" stroke-width="0.9" fill="none"/></svg>
<div style="position:absolute;left:410px;top:343.3px;width:148.7px;height:22.6px;background:#171717;border-radius:4px;"></div>
<div style="position:absolute;left:434.5px;top:348.5px;width:0.9px;height:12px;background:#2c2c2c;"></div>
<div style="position:absolute;left:515.5px;top:348.5px;width:0.9px;height:12px;background:#2c2c2c;"></div>
<svg style="position:absolute;left:418px;top:349.5px" width="9" height="10" stroke="#ccc" stroke-width="0.9" fill="none"><path d="M0.8 2.5h7.4M3 2.5V1h3v1.5M1.8 2.5l0.5 6.5h4.4l0.5-6.5M3.6 4.5v3M5.4 4.5v3"/></svg>
<svg style="position:absolute;left:442.5px;top:349.5px" width="10" height="10" stroke="#ccc" stroke-width="0.9" fill="none"><circle cx="5" cy="5" r="3.8"/><path d="M5 4.5v2.6M5 3v0.3"/></svg>
<div style="position:absolute;left:467.10px;top:351.10px;width:6.80px;height:6.80px;border-radius:50%;background:#c9cbd6;"></div>
<svg style="position:absolute;left:478px;top:353px" width="5" height="4"><path d="M0.5 0.8L2.5 2.8 4.5 0.8" stroke="#aaa" stroke-width="0.8" fill="none"/></svg>
<svg style="position:absolute;left:498px;top:349.5px" width="10" height="10" stroke="#ddd" stroke-width="1" fill="none"><path d="M1 1l3 3M9 1L6 4M1 9l3-3M9 9L6 6M2.5 4.2H4.2V2.5M7.5 4.2H5.8V2.5M2.5 5.8H4.2V7.5M7.5 5.8H5.8V7.5"/></svg>
<svg style="position:absolute;left:522px;top:350px" width="10" height="9" stroke="#ccc" stroke-width="0.9" fill="none"><path d="M1 7.5Q2 3 6 3.2M4.8 1.5L7 3.3 5 5M8 6.8V7.5"/></svg>
<div style="position:absolute;left:546.90px;top:350.90px;width:1.20px;height:1.20px;border-radius:50%;background:#ccc;"></div>
<div style="position:absolute;left:546.90px;top:353.50px;width:1.20px;height:1.20px;border-radius:50%;background:#ccc;"></div>
<div style="position:absolute;left:546.90px;top:356.10px;width:1.20px;height:1.20px;border-radius:50%;background:#ccc;"></div>
<div style="position:absolute;left:34px;top:617.58px;line-height:6.24px;font-size:5.2px;color:#bbb;font-weight:400;font-family:'Liberation Sans', sans-serif;white-space:pre;">T: 0.00s</div>
<div style="position:absolute;left:34px;top:624.18px;line-height:6.24px;font-size:5.2px;color:#bbb;font-weight:400;font-family:'Liberation Sans', sans-serif;white-space:pre;">I: 0</div>
<div style="position:absolute;left:34px;top:630.78px;line-height:6.24px;font-size:5.2px;color:#bbb;font-weight:400;font-family:'Liberation Sans', sans-serif;white-space:pre;">N: 12 [12]</div>
<div style="position:absolute;left:34px;top:637.38px;line-height:6.24px;font-size:5.2px;color:#bbb;font-weight:400;font-family:'Liberation Sans', sans-serif;white-space:pre;">V: 25</div>
<div style="position:absolute;left:34px;top:643.98px;line-height:6.24px;font-size:5.2px;color:#bbb;font-weight:400;font-family:'Liberation Sans', sans-serif;white-space:pre;">FPS:59.88</div>
<div style="position:absolute;left:1152px;top:631px;width:120.5px;height:17.5px;background:#141414;border-radius:3px;"></div>
<div style="position:absolute;left:1153.7px;top:633.3px;width:14.7px;height:15px;background:#303030;border-radius:4px;"></div>
<svg style="position:absolute;left:1155.5px;top:636px" width="10" height="10" stroke="#ddd" stroke-width="0.9" fill="none"><path d="M1.5 1.5L8 4 5 5 4 8z"/></svg>
<svg style="position:absolute;left:1172px;top:639.5px" width="5" height="4"><path d="M0.5 0.8L2.5 2.8 4.5 0.8" stroke="#bbb" stroke-width="0.8" fill="none"/></svg>
<svg style="position:absolute;left:1187.5px;top:636px" width="10" height="10" stroke="#ccc" stroke-width="0.9" fill="none"><path d="M1 3.5V1h2.5M6.5 1H9v2.5M9 6.5V9H6.5M3.5 9H1V6.5"/><circle cx="5" cy="5" r="1"/></svg>
<div style="position:absolute;left:1204.5px;top:637.22px;line-height:7.56px;font-size:6.3px;color:#e8e8e8;font-weight:700;font-family:'Liberation Sans', sans-serif;white-space:pre;">124%</div>
<svg style="position:absolute;left:1225px;top:639.5px" width="5" height="4"><path d="M0.5 0.8L2.5 2.8 4.5 0.8" stroke="#bbb" stroke-width="0.8" fill="none"/></svg>
<div style="position:absolute;left:1235px;top:633px;width:0.8px;height:14px;background:#1f1f1f;"></div>
<svg style="position:absolute;left:1240.5px;top:636.5px" width="10" height="9" stroke="#ddd" stroke-width="0.9" fill="none"><rect x="1" y="1" width="8" height="7"/><path d="M3.7 1v7M6.3 1v7"/></svg>
<svg style="position:absolute;left:1259px;top:636px" width="10" height="10" stroke="#ddd" stroke-width="0.9" fill="none"><path d="M1 1h3v3H1zM6 6h3v3H6zM4 2.5h3.5V6M6 7.5H2.5V4"/></svg>
</div></body></html>
